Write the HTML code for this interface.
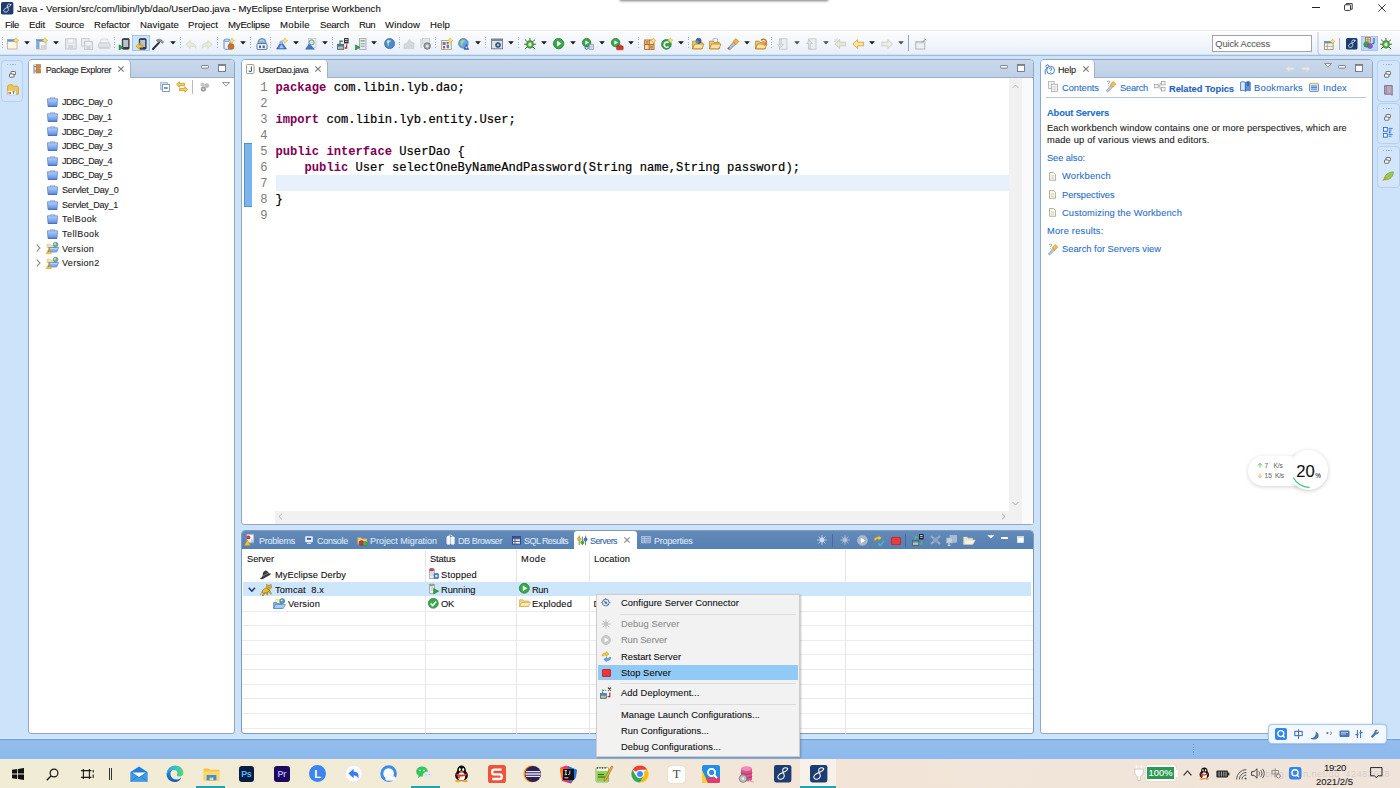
<!DOCTYPE html>
<html><head><meta charset="utf-8">
<style>
*{box-sizing:border-box;margin:0;padding:0}
html,body{width:1400px;height:788px;overflow:hidden;background:#cde3fa;font-family:"Liberation Sans",sans-serif;font-size:9.3px;color:#1a1a1a}
.a{position:absolute}
.t{position:absolute;white-space:pre;line-height:1;-webkit-text-stroke:.1px currentColor}
.m{position:absolute;white-space:pre;line-height:1;font-family:"Liberation Mono",monospace;font-size:12.15px;color:#000;-webkit-text-stroke:.2px currentColor}
.kw{color:#7f0055;font-weight:bold;-webkit-text-stroke:0}
svg{overflow:visible}
</style></head><body>
<div class="a" style="left:0px;top:0.0px;width:1400px;height:32px;background:#ffffff;"></div>
<div class="t" style="left:17.0px;top:4.4px;font-size:9.6px;letter-spacing:0.036px;color:#111;">Java - Version/src/com/libin/lyb/dao/UserDao.java - MyEclipse Enterprise Workbench</div>
<div class="t" style="left:5.0px;top:19.8px;font-size:9.6px;letter-spacing:-0.367px;color:#111;">File</div>
<div class="t" style="left:29.0px;top:19.8px;font-size:9.6px;letter-spacing:-0.136px;color:#111;">Edit</div>
<div class="t" style="left:55.0px;top:19.8px;font-size:9.6px;letter-spacing:-0.236px;color:#111;">Source</div>
<div class="t" style="left:94.0px;top:19.8px;font-size:9.6px;letter-spacing:-0.035px;color:#111;">Refactor</div>
<div class="t" style="left:140.0px;top:19.8px;font-size:9.6px;letter-spacing:0.139px;color:#111;">Navigate</div>
<div class="t" style="left:188.0px;top:19.8px;font-size:9.6px;letter-spacing:0.017px;color:#111;">Project</div>
<div class="t" style="left:228.0px;top:19.8px;font-size:9.6px;letter-spacing:-0.194px;color:#111;">MyEclipse</div>
<div class="t" style="left:280.0px;top:19.8px;font-size:9.6px;letter-spacing:0.287px;color:#111;">Mobile</div>
<div class="t" style="left:320.0px;top:19.8px;font-size:9.6px;letter-spacing:-0.236px;color:#111;">Search</div>
<div class="t" style="left:359.0px;top:19.8px;font-size:9.6px;letter-spacing:-0.537px;color:#111;">Run</div>
<div class="t" style="left:385.0px;top:19.8px;font-size:9.6px;letter-spacing:0.143px;color:#111;">Window</div>
<div class="t" style="left:430.0px;top:19.8px;font-size:9.6px;letter-spacing:0.064px;color:#111;">Help</div>
<div class="a" style="left:0px;top:30.3px;width:1400px;height:0.8px;background:#eeeeee;"></div>
<div class="a" style="left:0px;top:31.0px;width:1400px;height:22.3px;background:linear-gradient(#fdfdfe 0%,#f3f6fc 50%,#e8effa 100%);"></div>
<div class="a" style="left:0px;top:53.3px;width:1400px;height:1.2px;background:#e4f1fc;"></div>
<div class="a" style="left:0px;top:54.5px;width:1400px;height:1px;background:#a9bbce;"></div>
<div class="a" style="left:28px;top:59.0px;width:207px;height:675.4px;background:#fff;border:1px solid #93a7c2;border-radius:4px 4px 3px 3px"></div>
<div class="a" style="left:29px;top:60.0px;width:205px;height:17.5px;background:linear-gradient(#cad8eb,#bed0e6);border-radius:3px 3px 0 0;border-bottom:1px solid #9fb0c8"></div>
<div class="a" style="left:29px;top:60.0px;width:102px;height:18px;background:#fff;border-right:1px solid #a3b2c6;border-radius:3px 4px 0 0"></div>
<div class="a" style="left:241px;top:59.0px;width:793px;height:466.4px;background:#fff;border:1px solid #93a7c2;border-radius:4px 4px 3px 3px"></div>
<div class="a" style="left:242px;top:60.0px;width:791px;height:17.5px;background:linear-gradient(#cad8eb,#bed0e6);border-radius:3px 3px 0 0;border-bottom:1px solid #9fb0c8"></div>
<div class="a" style="left:242px;top:60.0px;width:85.6px;height:18px;background:#fff;border-right:1px solid #a3b2c6;border-radius:3px 4px 0 0"></div>
<div class="a" style="left:1040px;top:59.0px;width:332.5px;height:675.4px;background:#fff;border:1px solid #93a7c2;border-radius:4px 4px 3px 3px"></div>
<div class="a" style="left:1041px;top:60.0px;width:330.5px;height:17.5px;background:linear-gradient(#cad8eb,#bed0e6);border-radius:3px 3px 0 0;border-bottom:1px solid #9fb0c8"></div>
<div class="a" style="left:1041px;top:60.0px;width:54px;height:18px;background:#fff;border-right:1px solid #a3b2c6;border-radius:3px 4px 0 0"></div>
<div class="t" style="left:45.7px;top:65.5px;font-size:9.0px;letter-spacing:-0.346px;color:#222;">Package Explorer</div>
<div class="t" style="left:258.5px;top:65.5px;font-size:9.0px;letter-spacing:-0.377px;color:#222;">UserDao.java</div>
<div class="t" style="left:1058.0px;top:65.5px;font-size:9.0px;letter-spacing:-0.127px;color:#222;">Help</div>
<div class="t" style="left:62.0px;top:98.3px;font-size:9.0px;letter-spacing:-0.452px;color:#222;">JDBC_Day_0</div>
<div class="t" style="left:62.0px;top:112.9px;font-size:9.0px;letter-spacing:-0.502px;color:#222;">JDBC_Day_1</div>
<div class="t" style="left:62.0px;top:127.5px;font-size:9.0px;letter-spacing:-0.452px;color:#222;">JDBC_Day_2</div>
<div class="t" style="left:62.0px;top:142.1px;font-size:9.0px;letter-spacing:-0.452px;color:#222;">JDBC_Day_3</div>
<div class="t" style="left:62.0px;top:156.7px;font-size:9.0px;letter-spacing:-0.452px;color:#222;">JDBC_Day_4</div>
<div class="t" style="left:62.0px;top:171.4px;font-size:9.0px;letter-spacing:-0.452px;color:#222;">JDBC_Day_5</div>
<div class="t" style="left:62.0px;top:186.0px;font-size:9.0px;letter-spacing:-0.195px;color:#222;">Servlet_Day_0</div>
<div class="t" style="left:62.0px;top:200.6px;font-size:9.0px;letter-spacing:-0.233px;color:#222;">Servlet_Day_1</div>
<div class="t" style="left:62.0px;top:215.2px;font-size:9.0px;letter-spacing:0.426px;color:#222;">TelBook</div>
<div class="t" style="left:62.0px;top:229.8px;font-size:9.0px;letter-spacing:0.435px;color:#222;">TellBook</div>
<div class="t" style="left:62.0px;top:244.5px;font-size:9.0px;letter-spacing:0.283px;color:#222;">Version</div>
<div class="t" style="left:62.0px;top:259.1px;font-size:9.0px;letter-spacing:0.309px;color:#222;">Version2</div>
<div class="a" style="left:275.5px;top:175.4px;width:733px;height:15.4px;background:#e8f0fc;"></div>
<div class="a" style="left:244px;top:143.2px;width:8px;height:63.6px;background:#7db4ea;border:1px solid #4f93d6;border-right:none"></div>
<div class="m" style="left:260.3px;top:82.3px;color:#7d7d7d;-webkit-text-stroke:0">1</div>
<div class="m" style="left:275.4px;top:82.3px"><span class="kw">package</span> com.libin.lyb.dao;</div>
<div class="m" style="left:260.3px;top:98.3px;color:#7d7d7d;-webkit-text-stroke:0">2</div>
<div class="m" style="left:260.3px;top:114.3px;color:#7d7d7d;-webkit-text-stroke:0">3</div>
<div class="m" style="left:275.4px;top:114.3px"><span class="kw">import</span> com.libin.lyb.entity.User;</div>
<div class="m" style="left:260.3px;top:130.3px;color:#7d7d7d;-webkit-text-stroke:0">4</div>
<div class="m" style="left:260.3px;top:146.3px;color:#7d7d7d;-webkit-text-stroke:0">5</div>
<div class="m" style="left:275.4px;top:146.3px"><span class="kw">public</span> <span class="kw">interface</span> UserDao {</div>
<div class="m" style="left:260.3px;top:162.3px;color:#7d7d7d;-webkit-text-stroke:0">6</div>
<div class="m" style="left:275.4px;top:162.3px">    <span class="kw">public</span> User selectOneByNameAndPassword(String name,String password);</div>
<div class="m" style="left:260.3px;top:178.3px;color:#7d7d7d;-webkit-text-stroke:0">7</div>
<div class="m" style="left:260.3px;top:194.3px;color:#7d7d7d;-webkit-text-stroke:0">8</div>
<div class="m" style="left:275.4px;top:194.3px">}</div>
<div class="m" style="left:260.3px;top:210.3px;color:#7d7d7d;-webkit-text-stroke:0">9</div>
<div class="t" style="left:1062.0px;top:84.3px;font-size:9.3px;letter-spacing:-0.028px;color:#2a6fc9;">Contents</div>
<div class="t" style="left:1120.0px;top:84.3px;font-size:9.3px;letter-spacing:-0.244px;color:#2a6fc9;">Search</div>
<div class="t" style="left:1169.0px;top:84.6px;font-size:9.3px;letter-spacing:-0.033px;color:#1b62c4;font-weight:bold;">Related Topics</div>
<div class="t" style="left:1254.0px;top:84.3px;font-size:9.3px;letter-spacing:0.276px;color:#2a6fc9;">Bookmarks</div>
<div class="t" style="left:1323.0px;top:84.3px;font-size:9.3px;letter-spacing:0.250px;color:#2a6fc9;">Index</div>
<div class="a" style="left:1046px;top:97.0px;width:320px;height:1px;background:#b9c6d6;"></div>
<div class="t" style="left:1047.0px;top:109.1px;font-size:9.3px;letter-spacing:-0.121px;color:#1b6fca;font-weight:bold;">About Servers</div>
<div class="t" style="left:1047.0px;top:123.9px;font-size:9.3px;letter-spacing:0.120px;color:#222;">Each workbench window contains one or more perspectives, which are</div>
<div class="t" style="left:1047.0px;top:135.9px;font-size:9.3px;letter-spacing:0.173px;color:#222;">made up of various views and editors.</div>
<div class="t" style="left:1047.0px;top:154.3px;font-size:9.3px;letter-spacing:-0.086px;color:#2a6fc9;">See also:</div>
<div class="t" style="left:1062.0px;top:172.3px;font-size:9.3px;letter-spacing:0.237px;color:#2a6fc9;">Workbench</div>
<div class="t" style="left:1062.0px;top:190.6px;font-size:9.3px;letter-spacing:-0.062px;color:#2a6fc9;">Perspectives</div>
<div class="t" style="left:1062.0px;top:208.8px;font-size:9.3px;letter-spacing:0.155px;color:#2a6fc9;">Customizing the Workbench</div>
<div class="t" style="left:1047.0px;top:227.3px;font-size:9.3px;letter-spacing:0.212px;color:#2a6fc9;">More results:</div>
<div class="t" style="left:1062.0px;top:245.3px;font-size:9.3px;letter-spacing:0.012px;color:#2a6fc9;">Search for Servers view</div>
<div class="a" style="left:241px;top:530.0px;width:793px;height:204.4px;background:#fff;border:1px solid #8399b8;border-radius:4px 4px 3px 3px"></div>
<div class="a" style="left:242px;top:531.0px;width:791px;height:18px;background:linear-gradient(#628aba,#5680b2);border-radius:3px 3px 0 0"></div>
<div class="a" style="left:574px;top:531.0px;width:63px;height:18.5px;background:#fff;border-radius:3px 3px 0 0"></div>
<div class="t" style="left:259.0px;top:536.8px;font-size:9.0px;letter-spacing:-0.252px;color:#dde7f4;">Problems</div>
<div class="t" style="left:317.0px;top:536.8px;font-size:9.0px;letter-spacing:-0.289px;color:#dde7f4;">Console</div>
<div class="t" style="left:370.0px;top:536.8px;font-size:9.0px;letter-spacing:-0.031px;color:#dde7f4;">Project Migration</div>
<div class="t" style="left:458.0px;top:536.8px;font-size:9.0px;letter-spacing:-0.401px;color:#dde7f4;">DB Browser</div>
<div class="t" style="left:524.0px;top:536.8px;font-size:9.0px;letter-spacing:-0.562px;color:#dde7f4;">SQL Results</div>
<div class="t" style="left:590.0px;top:536.8px;font-size:9.0px;letter-spacing:-0.573px;color:#3a66a6;">Servers</div>
<div class="t" style="left:654.0px;top:536.8px;font-size:9.0px;letter-spacing:-0.252px;color:#dde7f4;">Properties</div>
<div class="a" style="left:424.6px;top:550.0px;width:1px;height:184px;background:#e6e6e6;"></div>
<div class="a" style="left:515.6px;top:550.0px;width:1px;height:184px;background:#e6e6e6;"></div>
<div class="a" style="left:588.6px;top:550.0px;width:1px;height:184px;background:#e6e6e6;"></div>
<div class="a" style="left:844.6px;top:550.0px;width:1px;height:184px;background:#e6e6e6;"></div>
<div class="a" style="left:242px;top:610.6px;width:791px;height:1px;background:#ebebeb;"></div>
<div class="a" style="left:242px;top:625.22px;width:791px;height:1px;background:#ebebeb;"></div>
<div class="a" style="left:242px;top:639.84px;width:791px;height:1px;background:#ebebeb;"></div>
<div class="a" style="left:242px;top:654.46px;width:791px;height:1px;background:#ebebeb;"></div>
<div class="a" style="left:242px;top:669.08px;width:791px;height:1px;background:#ebebeb;"></div>
<div class="a" style="left:242px;top:683.7px;width:791px;height:1px;background:#ebebeb;"></div>
<div class="a" style="left:242px;top:698.32px;width:791px;height:1px;background:#ebebeb;"></div>
<div class="a" style="left:242px;top:712.94px;width:791px;height:1px;background:#ebebeb;"></div>
<div class="a" style="left:242px;top:727.56px;width:791px;height:1px;background:#ebebeb;"></div>
<div class="a" style="left:243px;top:581.6px;width:788.4px;height:14.8px;background:#cde6fb;"></div>
<div class="t" style="left:247.0px;top:554.9px;font-size:9.3px;letter-spacing:-0.065px;color:#111;">Server</div>
<div class="t" style="left:430.0px;top:554.9px;font-size:9.3px;letter-spacing:-0.144px;color:#111;">Status</div>
<div class="t" style="left:521.0px;top:554.9px;font-size:9.3px;letter-spacing:0.434px;color:#111;">Mode</div>
<div class="t" style="left:594.0px;top:554.9px;font-size:9.3px;letter-spacing:0.105px;color:#111;">Location</div>
<div class="t" style="left:275.0px;top:570.7px;font-size:9.3px;letter-spacing:0.082px;color:#111;">MyEclipse Derby</div>
<div class="t" style="left:441.0px;top:570.7px;font-size:9.3px;letter-spacing:0.193px;color:#111;">Stopped</div>
<div class="t" style="left:275.0px;top:585.5px;font-size:9.3px;letter-spacing:0.132px;color:#111;">Tomcat  8.x</div>
<div class="t" style="left:441.0px;top:585.5px;font-size:9.3px;letter-spacing:-0.021px;color:#111;">Running</div>
<div class="t" style="left:532.0px;top:585.5px;font-size:9.3px;letter-spacing:-0.354px;color:#111;">Run</div>
<div class="t" style="left:288.0px;top:600.1px;font-size:9.3px;letter-spacing:0.140px;color:#111;">Version</div>
<div class="t" style="left:441.0px;top:600.1px;font-size:9.3px;letter-spacing:-0.218px;color:#111;">OK</div>
<div class="t" style="left:532.0px;top:600.1px;font-size:9.3px;letter-spacing:0.152px;color:#111;">Exploded</div>
<div class="a" style="left:1.5px;top:37px;width:1px;height:11px;background:repeating-linear-gradient(#a9b9cf 0 1px,transparent 1px 2.5px)"></div>
<svg class="a" style="left:6.8px;top:37.5px" width="12" height="12" viewBox="0 0 12 12"><rect x=".5" y="1.5" width="9.5" height="9.5" fill="#fdf8e4" stroke="#b8b08a" stroke-width=".8"/><rect x=".5" y="1.5" width="9.5" height="2.2" fill="#5f93da"/><polygon points="9.00,-0.34 9.90,1.60 11.84,2.50 9.90,3.40 9.00,5.34 8.10,3.40 6.16,2.50 8.10,1.60" fill="#fbe68a" stroke="#d9a622" stroke-width=".5"/></svg>
<svg class="a" style="left:23.5px;top:41.2px" width="6" height="4" viewBox="0 0 6 4"><path d="M0.2 0.3h5.6L3 3.6z" fill="#1a1a1a"/></svg>
<svg class="a" style="left:36px;top:37.5px" width="12" height="12" viewBox="0 0 12 12"><rect x=".5" y="1.5" width="9.5" height="9.5" fill="#fdf8e4" stroke="#b8b08a" stroke-width=".8"/><rect x=".5" y="1.5" width="9.5" height="2.2" fill="#5f93da"/><rect x=".5" y="3.7" width="3" height="7.3" fill="#7fa9e3"/><rect x="5" y="7" width="5" height="3" fill="#c9d7ea"/><polygon points="9.00,-0.34 9.90,1.60 11.84,2.50 9.90,3.40 9.00,5.34 8.10,3.40 6.16,2.50 8.10,1.60" fill="#fbe68a" stroke="#d9a622" stroke-width=".5"/></svg>
<svg class="a" style="left:52.7px;top:41.2px" width="6" height="4" viewBox="0 0 6 4"><path d="M0.2 0.3h5.6L3 3.6z" fill="#1a1a1a"/></svg>
<svg class="a" style="left:64.8px;top:37.5px" width="12" height="12" viewBox="0 0 12 12"><rect x=".6" y=".8" width="10.5" height="10.2" fill="#e9ebee" stroke="#c3c6ca" stroke-width="1"/><rect x="3" y="1" width="5.6" height="4" fill="#f7f8f9" stroke="#cfd2d6" stroke-width=".6"/><rect x="3.3" y="7.2" width="5" height="3.6" fill="#d2d5d9"/></svg>
<svg class="a" style="left:81px;top:37.5px" width="12" height="12" viewBox="0 0 12 12"><rect x=".6" y=".6" width="7.5" height="7.5" fill="#e9ebee" stroke="#c6c9cd" stroke-width=".9"/><rect x="3.6" y="3.6" width="8" height="8" fill="#e4e6e9" stroke="#c3c6ca" stroke-width=".9"/><rect x="5.6" y="8" width="4" height="3" fill="#d0d3d7"/><rect x="5.4" y="4" width="4.2" height="2.4" fill="#f7f8f9"/></svg>
<svg class="a" style="left:97.6px;top:37.5px" width="13" height="12" viewBox="0 0 13 12"><path d="M3 1h6.5l1 4H2z" fill="#f1f2f4" stroke="#cfd2d6" stroke-width=".7"/><rect x=".6" y="5" width="11.4" height="5.4" rx="1" fill="#e3e5e8" stroke="#c6c9cd" stroke-width=".8"/><rect x="1.5" y="8.6" width="9.6" height="1.2" fill="#cdd0d4"/></svg>
<div class="a" style="left:113.5px;top:37px;width:1px;height:11px;background:repeating-linear-gradient(#a9b9cf 0 1px,transparent 1px 2.5px)"></div>
<svg class="a" style="left:118.6px;top:37.5px" width="12" height="12" viewBox="0 0 12 12"><rect x="3.2" y=".5" width="7" height="10.8" rx="1.3" fill="#3a3f47" stroke="#22262c" stroke-width=".6"/><rect x="4.2" y="2" width="5" height="7" fill="#b9c3cf"/><path d="M0 6.8L4.6 9.4L0 12z" fill="#2fa043" stroke="#1d7a2e" stroke-width=".5"/></svg>
<div class="a" style="left:132px;top:35.0px;width:18.4px;height:15.6px;background:#cfe3f8;border:1px solid #9fc3ea"></div>
<svg class="a" style="left:136.4px;top:37.5px" width="12" height="12" viewBox="0 0 12 12"><rect x="3.2" y=".5" width="7" height="10.8" rx="1.3" fill="#3a3f47" stroke="#22262c" stroke-width=".6"/><rect x="4.2" y="2" width="5" height="7" fill="#b9c3cf"/><path d="M0 8.2L3.6 5v2h3.2v2.6H3.6v2z" fill="#f3c545" stroke="#b98a16" stroke-width=".6"/></svg>
<svg class="a" style="left:152px;top:37.5px" width="12" height="12" viewBox="0 0 12 12"><path d="M1 11L7 4.6" stroke="#2c2f33" stroke-width="2" stroke-linecap="round"/><path d="M4.2 2.2C6.5 .4 9.6 .8 11.6 4.2L10.2 5.2C9 3.6 7.6 3.4 6.4 4.4z" fill="#8c939c" stroke="#5b6068" stroke-width=".5"/></svg>
<svg class="a" style="left:169.5px;top:41.2px" width="6" height="4" viewBox="0 0 6 4"><path d="M0.2 0.3h5.6L3 3.6z" fill="#1a1a1a"/></svg>
<div class="a" style="left:179.5px;top:37px;width:1px;height:11px;background:repeating-linear-gradient(#a9b9cf 0 1px,transparent 1px 2.5px)"></div>
<svg class="a" style="left:184.6px;top:37.5px" width="12" height="12" viewBox="0 0 12 12"><path d="M.8 6.4L5.2 2.4v2.4c3.6 0 5.8 1.8 5.6 5.6C9.8 8.4 8 7.8 5.2 8v2.4z" fill="#e9edd8" stroke="#cfd5b8" stroke-width=".7"/></svg>
<svg class="a" style="left:200.6px;top:37.5px" width="12" height="12" viewBox="0 0 12 12"><g transform="translate(12,0) scale(-1,1)"><path d="M.8 6.4L5.2 2.4v2.4c3.6 0 5.8 1.8 5.6 5.6C9.8 8.4 8 7.8 5.2 8v2.4z" fill="#e9edd8" stroke="#cfd5b8" stroke-width=".7"/></g></svg>
<div class="a" style="left:216.5px;top:37px;width:1px;height:11px;background:repeating-linear-gradient(#a9b9cf 0 1px,transparent 1px 2.5px)"></div>
<svg class="a" style="left:223px;top:37.5px" width="12" height="12" viewBox="0 0 12 12"><path d="M1 2.2v8c0 1.6 6 1.6 6 0v-8z" fill="#eaf2fc" stroke="#4b86d0" stroke-width=".9"/><ellipse cx="4" cy="2.2" rx="3" ry="1.2" fill="#cfe1f7" stroke="#4b86d0" stroke-width=".8"/><circle cx="8" cy="8.6" r="3" fill="#c9702a" stroke="#8e4a16" stroke-width=".5"/><polygon points="9.00,-0.15 9.88,1.72 11.75,2.60 9.88,3.48 9.00,5.35 8.12,3.48 6.25,2.60 8.12,1.72" fill="#fbe68a" stroke="#d9a622" stroke-width=".5"/></svg>
<svg class="a" style="left:239.5px;top:41.2px" width="6" height="4" viewBox="0 0 6 4"><path d="M0.2 0.3h5.6L3 3.6z" fill="#1a1a1a"/></svg>
<div class="a" style="left:249.5px;top:37px;width:1px;height:11px;background:repeating-linear-gradient(#a9b9cf 0 1px,transparent 1px 2.5px)"></div>
<svg class="a" style="left:255.6px;top:37.5px" width="12" height="12" viewBox="0 0 12 12"><circle cx="6" cy="4.4" r="4" fill="#7fb2e8" stroke="#3f78bd" stroke-width=".7"/><path d="M3.4 3.4c1.4-1.6 3.4-1.4 4.6 0" stroke="#e9d36a" stroke-width="1.1" fill="none"/><rect x="1" y="5.6" width="10" height="5.8" rx=".8" fill="#f4f7fb" stroke="#46679a" stroke-width=".9"/><path d="M3 7.4h2v2.6H3zM6.6 7.4h2.2v2.6H6.6z" fill="#46679a"/></svg>
<div class="a" style="left:270.0px;top:37px;width:1px;height:11px;background:repeating-linear-gradient(#a9b9cf 0 1px,transparent 1px 2.5px)"></div>
<svg class="a" style="left:276px;top:37.5px" width="12" height="12" viewBox="0 0 12 12"><path d="M.6 11L5.4 3.4L10.4 11z" fill="#3d79cf" stroke="#27579e" stroke-width=".6"/><path d="M3 10.2L5.4 6.2L8 10.2z" fill="#a9caf3"/><circle cx="5.2" cy="4.4" r="1.8" fill="#8fb7e8"/><polygon points="9.00,-0.15 9.88,1.72 11.75,2.60 9.88,3.48 9.00,5.35 8.12,3.48 6.25,2.60 8.12,1.72" fill="#fbe68a" stroke="#d9a622" stroke-width=".5"/></svg>
<svg class="a" style="left:292.8px;top:41.2px" width="6" height="4" viewBox="0 0 6 4"><path d="M0.2 0.3h5.6L3 3.6z" fill="#1a1a1a"/></svg>
<svg class="a" style="left:305px;top:37.5px" width="12" height="12" viewBox="0 0 12 12"><rect x="3.6" y=".6" width="7.4" height="8.6" fill="#f1f3f6" stroke="#b9c0ca" stroke-width=".7"/><path d="M.6 11.2L4.2 5.8L9.4 11.2z" fill="#3d79cf" stroke="#27579e" stroke-width=".5"/><circle cx="6.6" cy="4.4" r="2.6" fill="#cfe6c0" stroke="#5f84b8" stroke-width=".9"/></svg>
<svg class="a" style="left:321.7px;top:41.2px" width="6" height="4" viewBox="0 0 6 4"><path d="M0.2 0.3h5.6L3 3.6z" fill="#1a1a1a"/></svg>
<div class="a" style="left:332.0px;top:37px;width:1px;height:11px;background:repeating-linear-gradient(#a9b9cf 0 1px,transparent 1px 2.5px)"></div>
<svg class="a" style="left:337.2px;top:37.5px" width="12" height="12" viewBox="0 0 12 12"><rect x="7" y="0" width="4.6" height="5.6" rx=".6" fill="#2e3238"/><rect x="8" y="1" width="2.6" height="1" fill="#c7ccd3"/><rect x="8" y="2.8" width="2.6" height="1" fill="#c7ccd3"/><path d="M3 6V3.2h3" stroke="#3c7a3a" stroke-width="1.2" fill="none"/><rect x=".4" y="6.2" width="6.4" height="5.2" fill="#3f78c7" stroke="#24508f" stroke-width=".6"/><rect x="1" y="8.6" width="5.2" height="2.2" fill="#e7c34b"/><path d="M9.6 6.6v3.4H7.6" stroke="#c52a2a" stroke-width="1.3" fill="none"/></svg>
<svg class="a" style="left:354.8px;top:37.5px" width="12" height="12" viewBox="0 0 12 12"><rect x="4.4" y=".6" width="6.6" height="10.8" fill="#e6e9ed" stroke="#9aa2ad" stroke-width=".8"/><rect x="5.6" y="2" width="4.2" height="1.6" fill="#8fb77a"/><rect x="5.6" y="5" width="4.2" height="1.4" fill="#aab2bd"/><rect x="5.6" y="7.6" width="4.2" height="1.4" fill="#aab2bd"/><path d="M.4 6.8L5 9.4L.4 12z" fill="#2fa043" stroke="#1d7a2e" stroke-width=".5"/></svg>
<svg class="a" style="left:371px;top:41.2px" width="6" height="4" viewBox="0 0 6 4"><path d="M0.2 0.3h5.6L3 3.6z" fill="#1a1a1a"/></svg>
<svg class="a" style="left:383.6px;top:37.5px" width="11" height="11" viewBox="0 0 11 11"><circle cx="5.6" cy="5.6" r="5" fill="#4a8ad6" stroke="#2b5fa6" stroke-width=".7"/><path d="M3 3.4c1.2-1.6 3-1.8 4-1c-.4 1.6-1 2-2 2.4c-.6 1.2.4 2 0 3.4c-1.4-.6-2.6-2.4-2-4.8z" fill="#9fd07a"/><circle cx="4" cy="3.6" r="1.3" fill="#d6e8fb" opacity=".8"/></svg>
<div class="a" style="left:398.5px;top:37px;width:1px;height:11px;background:repeating-linear-gradient(#a9b9cf 0 1px,transparent 1px 2.5px)"></div>
<svg class="a" style="left:403px;top:37.5px" width="12" height="12" viewBox="0 0 12 12"><path d="M1 10.6V6.4l3-1.4L6.4 1.6L8.4 4l2.6 1v5.6z" fill="#d4d7db" stroke="#c2c5c9" stroke-width=".6"/></svg>
<svg class="a" style="left:420px;top:37.5px" width="12" height="12" viewBox="0 0 12 12"><rect x="2.6" y=".6" width="7" height="5.4" fill="#e3e5e8" stroke="#c6c9cd" stroke-width=".7"/><path d="M1 1v9" stroke="#b8bbc0" stroke-width=".8"/><circle cx="7.2" cy="8" r="3.3" fill="#9a9ea5" stroke="#6f737a" stroke-width=".8"/><circle cx="7.2" cy="8" r="1.5" fill="#e8e9eb"/></svg>
<div class="a" style="left:435.0px;top:37px;width:1px;height:11px;background:repeating-linear-gradient(#a9b9cf 0 1px,transparent 1px 2.5px)"></div>
<svg class="a" style="left:440.6px;top:37.5px" width="12" height="12" viewBox="0 0 12 12"><rect x=".6" y="2.4" width="9.6" height="9" fill="#f6f1df" stroke="#9c987f" stroke-width=".8"/><rect x="1.6" y="4" width="3" height="3" fill="#4a86d3"/><rect x="5.6" y="6.6" width="2.4" height="3.6" fill="#4a86d3"/><rect x="2" y="8" width="2" height="2.4" fill="#d0453b"/><rect x="5.6" y="4" width="2" height="1.8" fill="#d0453b"/><polygon points="9.20,-0.15 10.08,1.72 11.95,2.60 10.08,3.48 9.20,5.35 8.32,3.48 6.45,2.60 8.32,1.72" fill="#fbe68a" stroke="#d9a622" stroke-width=".5"/></svg>
<svg class="a" style="left:458px;top:37.5px" width="12" height="12" viewBox="0 0 12 12"><circle cx="5.4" cy="5.4" r="4.8" fill="#6aa5e4" stroke="#3a6fb5" stroke-width=".7"/><path d="M2.4 3.6c1.4-1.8 3.6-2 4.6-1c-.6 1.4-1.4 1.8-2.4 2.2c-.4 1.2.4 2-.2 3.2c-1.4-.6-2.4-2.2-2-4.4z" fill="#a9d58a"/><path d="M6 11.4l2.2-5.2l2.6 5.2z" fill="#2e64b6" stroke="#1d4688" stroke-width=".4"/><circle cx="8.4" cy="9.4" r=".9" fill="#dbe8f8"/></svg>
<svg class="a" style="left:475px;top:41.2px" width="6" height="4" viewBox="0 0 6 4"><path d="M0.2 0.3h5.6L3 3.6z" fill="#1a1a1a"/></svg>
<div class="a" style="left:485.0px;top:37px;width:1px;height:11px;background:repeating-linear-gradient(#a9b9cf 0 1px,transparent 1px 2.5px)"></div>
<svg class="a" style="left:491px;top:37.5px" width="12" height="12" viewBox="0 0 12 12"><rect x=".6" y="1" width="10.8" height="9.8" fill="#dfe3e8" stroke="#6d7682" stroke-width=".9"/><rect x=".6" y="1" width="10.8" height="2" fill="#7c8794"/><circle cx="7" cy="7" r="2.5" fill="#3d5f8f" stroke="#26405f" stroke-width=".6"/><circle cx="7" cy="7" r="1" fill="#cfe0f5"/></svg>
<svg class="a" style="left:507.6px;top:41.2px" width="6" height="4" viewBox="0 0 6 4"><path d="M0.2 0.3h5.6L3 3.6z" fill="#1a1a1a"/></svg>
<div class="a" style="left:517.5px;top:37px;width:1px;height:11px;background:repeating-linear-gradient(#a9b9cf 0 1px,transparent 1px 2.5px)"></div>
<svg class="a" style="left:523.6px;top:37.5px" width="12" height="12" viewBox="0 0 12 12"><path d="M1 1.6l2.4 2.2M11 1.6L8.6 3.8M0 6.2h3M12 6.2H9M1 11l2.4-2.4M11 11L8.6 8.6M6 0v2.4" stroke="#3b6f2a" stroke-width="1"/><ellipse cx="6" cy="6.4" rx="3.4" ry="3.8" fill="#59b04a" stroke="#2f7a2a" stroke-width=".8"/><ellipse cx="6" cy="6.6" rx="1.6" ry="2" fill="#d6efc9"/></svg>
<svg class="a" style="left:540.5px;top:41.2px" width="6" height="4" viewBox="0 0 6 4"><path d="M0.2 0.3h5.6L3 3.6z" fill="#1a1a1a"/></svg>
<svg class="a" style="left:553px;top:37.5px" width="12" height="12" viewBox="0 0 12 12"><circle cx="5.6" cy="5.6" r="5.2" fill="#3aa84a" stroke="#1f7a2c" stroke-width=".8"/><path d="M4 2.8L8.6 5.6L4 8.4z" fill="#fff"/></svg>
<svg class="a" style="left:569.6px;top:41.2px" width="6" height="4" viewBox="0 0 6 4"><path d="M0.2 0.3h5.6L3 3.6z" fill="#1a1a1a"/></svg>
<svg class="a" style="left:582px;top:37.5px" width="12" height="12" viewBox="0 0 12 12"><circle cx="4.6" cy="4.6" r="4.2" fill="#3aa84a" stroke="#1f7a2c" stroke-width=".8"/><path d="M3.4 2.4L7 4.6L3.4 6.8z" fill="#fff"/><rect x="7.2" y="6.4" width="4.2" height="5" fill="#c9d3e2" stroke="#7f8fa8" stroke-width=".6"/><circle cx="4.6" cy="9.8" r="1.6" fill="none" stroke="#2f64b0" stroke-width=".9"/></svg>
<svg class="a" style="left:599px;top:41.2px" width="6" height="4" viewBox="0 0 6 4"><path d="M0.2 0.3h5.6L3 3.6z" fill="#1a1a1a"/></svg>
<svg class="a" style="left:611px;top:37.5px" width="12" height="12" viewBox="0 0 12 12"><circle cx="4.6" cy="4.6" r="4.2" fill="#3aa84a" stroke="#1f7a2c" stroke-width=".8"/><path d="M3.4 2.4L7 4.6L3.4 6.8z" fill="#fff"/><rect x="5.6" y="8" width="6.6" height="3.8" rx=".6" fill="#d23a2e" stroke="#962118" stroke-width=".5"/><path d="M7.6 8V7h2.6v1" stroke="#962118" stroke-width=".8" fill="none"/></svg>
<svg class="a" style="left:628px;top:41.2px" width="6" height="4" viewBox="0 0 6 4"><path d="M0.2 0.3h5.6L3 3.6z" fill="#1a1a1a"/></svg>
<div class="a" style="left:638.0px;top:37px;width:1px;height:11px;background:repeating-linear-gradient(#a9b9cf 0 1px,transparent 1px 2.5px)"></div>
<svg class="a" style="left:644px;top:37.5px" width="12" height="12" viewBox="0 0 12 12"><rect x=".6" y="2" width="9.4" height="9.4" fill="#f3dcb4" stroke="#a7672a" stroke-width=".9"/><path d="M.6 6.6h9.4M5.2 2v9.4" stroke="#a7672a" stroke-width="1"/><rect x="1.4" y="2.8" width="3" height="3" fill="#d98c3a"/><rect x="6" y="7.4" width="3.2" height="3.2" fill="#d98c3a"/><polygon points="9.40,-0.15 10.28,1.72 12.15,2.60 10.28,3.48 9.40,5.35 8.52,3.48 6.65,2.60 8.52,1.72" fill="#fbe68a" stroke="#d9a622" stroke-width=".5"/></svg>
<svg class="a" style="left:661px;top:37.5px" width="12" height="12" viewBox="0 0 12 12"><circle cx="5.4" cy="6.4" r="4.8" fill="#38a14a" stroke="#1f7a2c" stroke-width=".8"/><path d="M7.6 4.8C6.8 3.8 5 3.6 4 4.8c-1 1.2-1 2.8 0 3.8c1 1 2.8 1 3.6 0" stroke="#fff" stroke-width="1.4" fill="none"/><polygon points="9.40,-0.18 10.22,1.58 11.98,2.40 10.22,3.22 9.40,4.98 8.58,3.22 6.82,2.40 8.58,1.58" fill="#fbe68a" stroke="#d9a622" stroke-width=".5"/></svg>
<svg class="a" style="left:677.6px;top:41.2px" width="6" height="4" viewBox="0 0 6 4"><path d="M0.2 0.3h5.6L3 3.6z" fill="#1a1a1a"/></svg>
<div class="a" style="left:687.5px;top:37px;width:1px;height:11px;background:repeating-linear-gradient(#a9b9cf 0 1px,transparent 1px 2.5px)"></div>
<svg class="a" style="left:692px;top:37.5px" width="12" height="12" viewBox="0 0 12 12"><path d="M.6 3.2h3.6l1 1.2h5v6.4H.6z" fill="#f5c96b" stroke="#b98222" stroke-width=".8"/><path d="M.6 10.8L2.6 6h9.4l-2 4.8z" fill="#fbe2a0" stroke="#b98222" stroke-width=".8"/><circle cx="6.6" cy="2.8" r="2.6" fill="#4c58b8" stroke="#2d357a" stroke-width=".5"/><circle cx="5.2" cy="3.8" r="1.6" fill="#4fae55"/></svg>
<svg class="a" style="left:709px;top:37.5px" width="12" height="12" viewBox="0 0 12 12"><rect x="4" y=".8" width="4.6" height="3.8" fill="#f2f4f7" stroke="#8d96a3" stroke-width=".6"/><path d="M.6 3.2h3.6l1 1.2h5v6.4H.6z" fill="#f5c96b" stroke="#b98222" stroke-width=".8"/><path d="M.6 10.8L2.6 6h9.4l-2 4.8z" fill="#fbe2a0" stroke="#b98222" stroke-width=".8"/></svg>
<svg class="a" style="left:727px;top:37.5px" width="12" height="12" viewBox="0 0 12 12"><path d="M.8 10.6L6.4 4l2.4 2.2L2.8 11.8z" fill="#b7bec8" stroke="#6f7885" stroke-width=".6"/><path d="M6 3.4L9 .6l2.8 2.8L9 6.6z" fill="#f2b53a" stroke="#b67a14" stroke-width=".6"/><path d="M1 11l1.4-1.4" stroke="#c94a2a" stroke-width="1.4"/></svg>
<svg class="a" style="left:743.8px;top:41.2px" width="6" height="4" viewBox="0 0 6 4"><path d="M0.2 0.3h5.6L3 3.6z" fill="#1a1a1a"/></svg>
<svg class="a" style="left:755px;top:37.5px" width="12" height="12" viewBox="0 0 12 12"><path d="M.6 3.2h3.6l1 1.2h5v6.4H.6z" fill="#f5c96b" stroke="#b98222" stroke-width=".8"/><path d="M.6 10.8L2.6 6h9.4l-2 4.8z" fill="#fbe2a0" stroke="#b98222" stroke-width=".8"/><path d="M6 2.4c2-2 5-1 5.4 1.4c.2 1.8-1 3-2.4 3.4" stroke="#c9702a" stroke-width="1.4" fill="none"/><circle cx="8.6" cy="5" r="2" fill="#e09a4a"/></svg>
<div class="a" style="left:770.5px;top:37px;width:1px;height:11px;background:repeating-linear-gradient(#a9b9cf 0 1px,transparent 1px 2.5px)"></div>
<svg class="a" style="left:776px;top:37.5px" width="12" height="12" viewBox="0 0 12 12"><rect x="3.6" y=".8" width="7.4" height="10.4" fill="#eceef1" stroke="#bfc3c9" stroke-width=".8"/><path d="M3.4 1v5.4H1.4L4.4 10l3-3.6h-2V1z" fill="#dfe2e6" stroke="#b9bdc3" stroke-width=".6"/></svg>
<svg class="a" style="left:793.6px;top:41.2px" width="6" height="4" viewBox="0 0 6 4"><path d="M0.2 0.3h5.6L3 3.6z" fill="#4a4a4a"/></svg>
<svg class="a" style="left:805px;top:37.5px" width="12" height="12" viewBox="0 0 12 12"><rect x="3.6" y=".8" width="7.4" height="10.4" fill="#eceef1" stroke="#bfc3c9" stroke-width=".8"/><path d="M3.4 11V5.6H1.4L4.4 2l3 3.6h-2V11z" fill="#dfe2e6" stroke="#b9bdc3" stroke-width=".6"/></svg>
<svg class="a" style="left:822.5px;top:41.2px" width="6" height="4" viewBox="0 0 6 4"><path d="M0.2 0.3h5.6L3 3.6z" fill="#4a4a4a"/></svg>
<svg class="a" style="left:834px;top:37.5px" width="13" height="12" viewBox="0 0 13 12"><path d="M.8 6L5.6 1.6v2.6h6v3.6h-6v2.6z" fill="#e6e8d6" stroke="#c3c7b0" stroke-width=".8"/><path d="M1 1.2l1 1.6M3 .6v1.8M0 3.2h1.8" stroke="#b8bcc2" stroke-width=".7"/></svg>
<svg class="a" style="left:852px;top:37.5px" width="13" height="12" viewBox="0 0 13 12"><path d="M.8 6L5.6 1.6v2.6h6v3.6h-6v2.6z" fill="#fbe7a0" stroke="#d69e1e" stroke-width=".8"/></svg>
<svg class="a" style="left:868.5px;top:41.2px" width="6" height="4" viewBox="0 0 6 4"><path d="M0.2 0.3h5.6L3 3.6z" fill="#1a1a1a"/></svg>
<svg class="a" style="left:880.6px;top:37.5px" width="13" height="12" viewBox="0 0 13 12"><g transform="translate(12.4,0) scale(-1,1)"><path d="M.8 6L5.6 1.6v2.6h6v3.6h-6v2.6z" fill="#eceee2" stroke="#c6c9b8" stroke-width=".8"/></g></svg>
<svg class="a" style="left:897.5px;top:41.2px" width="6" height="4" viewBox="0 0 6 4"><path d="M0.2 0.3h5.6L3 3.6z" fill="#4a4a4a"/></svg>
<div class="a" style="left:908px;top:35.0px;width:1px;height:16px;background:#9aa7b8;"></div>
<svg class="a" style="left:915px;top:37.5px" width="12" height="12" viewBox="0 0 12 12"><rect x=".8" y="3.4" width="9" height="7.6" fill="#eef0f3" stroke="#a9aeb6" stroke-width=".9"/><rect x=".8" y="3.4" width="9" height="1.8" fill="#c8ccd2"/><path d="M7 4.6L10.6 1M9.4 .6l1.8 1.8" stroke="#8d929a" stroke-width="1"/></svg>
<svg class="a" style="left:33.2px;top:64.2px" width="9" height="10" viewBox="0 0 9 10"><path d="M1 .5v9.2" stroke="#7a7a7a" stroke-width="1"/><path d="M1 2.6h2M1 7h2" stroke="#7a7a7a" stroke-width=".8"/><rect x="3" y=".6" width="4.6" height="3.8" fill="#c98b4a" stroke="#9a6128" stroke-width=".5"/><rect x="3" y="5.2" width="4.6" height="3.8" fill="#c98b4a" stroke="#9a6128" stroke-width=".5"/></svg>
<svg class="a" style="left:117px;top:65.2px" width="8" height="8" viewBox="0 0 8 8"><path d="M1.2999999999999998 1.2999999999999998L6.7 6.7M6.7 1.2999999999999998L1.2999999999999998 6.7" stroke="#7a7a7a" stroke-width="1.15"/></svg>
<svg class="a" style="left:201px;top:64.6px" width="8" height="4" viewBox="0 0 8 4"><rect x=".5" y=".5" width="7" height="2.6" rx=".8" fill="#fff" stroke="#66788f" stroke-width=".9"/></svg>
<svg class="a" style="left:218px;top:64.4px" width="8" height="8" viewBox="0 0 8 8"><rect x=".5" y=".5" width="7" height="7" fill="#fff" stroke="#66788f" stroke-width=".9"/><rect x=".5" y=".3" width="7" height="1.6" fill="#7d7f88"/></svg>
<svg class="a" style="left:160px;top:82.0px" width="10" height="10" viewBox="0 0 10 10"><rect x=".5" y=".5" width="7" height="7" fill="#cfe0ee" stroke="#9db9d2" stroke-width=".8"/><rect x="2.4" y="2.4" width="7" height="7" fill="#fff" stroke="#6e8fb4" stroke-width=".9"/><path d="M4 6h3.8" stroke="#3a5f8f" stroke-width="1.3"/></svg>
<svg class="a" style="left:175.6px;top:81.0px" width="12" height="12" viewBox="0 0 12 12"><path d="M.6 3.4L3.4 .8v1.6h5.2v2.2H3.4v1.6z" fill="#f8d25a" stroke="#c8951f" stroke-width=".8"/><path d="M11.6 8.6L8.8 11.2V9.6H3.6V7.4h5.2V5.8z" fill="#f8d25a" stroke="#c8951f" stroke-width=".8"/></svg>
<div class="a" style="left:191.6px;top:80.0px;width:1px;height:13.5px;background:#b9b9b9;"></div>
<svg class="a" style="left:200px;top:82.0px" width="10" height="10" viewBox="0 0 10 10"><circle cx="2.6" cy="2.6" r="2.2" fill="#c9c9c9"/><circle cx="6.8" cy="3.6" r="2.4" fill="#bdbdbd"/><circle cx="3.4" cy="7" r="2.6" fill="#9c9c9c"/><circle cx="3.4" cy="7" r="1" fill="#d8d8d8"/></svg>
<svg class="a" style="left:221.6px;top:81.8px" width="8" height="5" viewBox="0 0 8 5"><path d="M.5 .5h7L4 4.2z" fill="#fff" stroke="#7a7a7a" stroke-width=".8"/></svg>
<svg class="a" style="left:47.2px;top:97.2px" width="11" height="10" viewBox="0 0 11 10"><defs><linearGradient id="pg" x1="0" y1="0" x2="0" y2="1"><stop offset="0" stop-color="#b4d2f7"/><stop offset="1" stop-color="#5d8de0"/></linearGradient></defs><path d="M3.400 2V.4h4.200V2" fill="#eef2f8" stroke="#9dabc6" stroke-width=".7"/><path d="M.4 1.8h10.2L10 9.4H1z" fill="url(#pg)" stroke="#5a7fd0" stroke-width=".7"/><path d="M1 9.4h9" stroke="#4664b8" stroke-width=".9"/></svg>
<svg class="a" style="left:47.2px;top:111.82px" width="11" height="10" viewBox="0 0 11 10"><defs><linearGradient id="pg" x1="0" y1="0" x2="0" y2="1"><stop offset="0" stop-color="#b4d2f7"/><stop offset="1" stop-color="#5d8de0"/></linearGradient></defs><path d="M3.400 2V.4h4.200V2" fill="#eef2f8" stroke="#9dabc6" stroke-width=".7"/><path d="M.4 1.8h10.2L10 9.4H1z" fill="url(#pg)" stroke="#5a7fd0" stroke-width=".7"/><path d="M1 9.4h9" stroke="#4664b8" stroke-width=".9"/></svg>
<svg class="a" style="left:47.2px;top:126.44px" width="11" height="10" viewBox="0 0 11 10"><defs><linearGradient id="pg" x1="0" y1="0" x2="0" y2="1"><stop offset="0" stop-color="#b4d2f7"/><stop offset="1" stop-color="#5d8de0"/></linearGradient></defs><path d="M3.400 2V.4h4.200V2" fill="#eef2f8" stroke="#9dabc6" stroke-width=".7"/><path d="M.4 1.8h10.2L10 9.4H1z" fill="url(#pg)" stroke="#5a7fd0" stroke-width=".7"/><path d="M1 9.4h9" stroke="#4664b8" stroke-width=".9"/></svg>
<svg class="a" style="left:47.2px;top:141.06px" width="11" height="10" viewBox="0 0 11 10"><defs><linearGradient id="pg" x1="0" y1="0" x2="0" y2="1"><stop offset="0" stop-color="#b4d2f7"/><stop offset="1" stop-color="#5d8de0"/></linearGradient></defs><path d="M3.400 2V.4h4.200V2" fill="#eef2f8" stroke="#9dabc6" stroke-width=".7"/><path d="M.4 1.8h10.2L10 9.4H1z" fill="url(#pg)" stroke="#5a7fd0" stroke-width=".7"/><path d="M1 9.4h9" stroke="#4664b8" stroke-width=".9"/></svg>
<svg class="a" style="left:47.2px;top:155.68px" width="11" height="10" viewBox="0 0 11 10"><defs><linearGradient id="pg" x1="0" y1="0" x2="0" y2="1"><stop offset="0" stop-color="#b4d2f7"/><stop offset="1" stop-color="#5d8de0"/></linearGradient></defs><path d="M3.400 2V.4h4.200V2" fill="#eef2f8" stroke="#9dabc6" stroke-width=".7"/><path d="M.4 1.8h10.2L10 9.4H1z" fill="url(#pg)" stroke="#5a7fd0" stroke-width=".7"/><path d="M1 9.4h9" stroke="#4664b8" stroke-width=".9"/></svg>
<svg class="a" style="left:47.2px;top:170.3px" width="11" height="10" viewBox="0 0 11 10"><defs><linearGradient id="pg" x1="0" y1="0" x2="0" y2="1"><stop offset="0" stop-color="#b4d2f7"/><stop offset="1" stop-color="#5d8de0"/></linearGradient></defs><path d="M3.400 2V.4h4.200V2" fill="#eef2f8" stroke="#9dabc6" stroke-width=".7"/><path d="M.4 1.8h10.2L10 9.4H1z" fill="url(#pg)" stroke="#5a7fd0" stroke-width=".7"/><path d="M1 9.4h9" stroke="#4664b8" stroke-width=".9"/></svg>
<svg class="a" style="left:47.2px;top:184.92px" width="11" height="10" viewBox="0 0 11 10"><defs><linearGradient id="pg" x1="0" y1="0" x2="0" y2="1"><stop offset="0" stop-color="#b4d2f7"/><stop offset="1" stop-color="#5d8de0"/></linearGradient></defs><path d="M3.400 2V.4h4.200V2" fill="#eef2f8" stroke="#9dabc6" stroke-width=".7"/><path d="M.4 1.8h10.2L10 9.4H1z" fill="url(#pg)" stroke="#5a7fd0" stroke-width=".7"/><path d="M1 9.4h9" stroke="#4664b8" stroke-width=".9"/></svg>
<svg class="a" style="left:47.2px;top:199.54px" width="11" height="10" viewBox="0 0 11 10"><defs><linearGradient id="pg" x1="0" y1="0" x2="0" y2="1"><stop offset="0" stop-color="#b4d2f7"/><stop offset="1" stop-color="#5d8de0"/></linearGradient></defs><path d="M3.400 2V.4h4.200V2" fill="#eef2f8" stroke="#9dabc6" stroke-width=".7"/><path d="M.4 1.8h10.2L10 9.4H1z" fill="url(#pg)" stroke="#5a7fd0" stroke-width=".7"/><path d="M1 9.4h9" stroke="#4664b8" stroke-width=".9"/></svg>
<svg class="a" style="left:47.2px;top:214.16px" width="11" height="10" viewBox="0 0 11 10"><defs><linearGradient id="pg" x1="0" y1="0" x2="0" y2="1"><stop offset="0" stop-color="#b4d2f7"/><stop offset="1" stop-color="#5d8de0"/></linearGradient></defs><path d="M3.400 2V.4h4.200V2" fill="#eef2f8" stroke="#9dabc6" stroke-width=".7"/><path d="M.4 1.8h10.2L10 9.4H1z" fill="url(#pg)" stroke="#5a7fd0" stroke-width=".7"/><path d="M1 9.4h9" stroke="#4664b8" stroke-width=".9"/></svg>
<svg class="a" style="left:47.2px;top:228.78px" width="11" height="10" viewBox="0 0 11 10"><defs><linearGradient id="pg" x1="0" y1="0" x2="0" y2="1"><stop offset="0" stop-color="#b4d2f7"/><stop offset="1" stop-color="#5d8de0"/></linearGradient></defs><path d="M3.400 2V.4h4.200V2" fill="#eef2f8" stroke="#9dabc6" stroke-width=".7"/><path d="M.4 1.8h10.2L10 9.4H1z" fill="url(#pg)" stroke="#5a7fd0" stroke-width=".7"/><path d="M1 9.4h9" stroke="#4664b8" stroke-width=".9"/></svg>
<svg class="a" style="left:46px;top:242.0px" width="13" height="12" viewBox="0 0 13 12"><path d="M1 2.2h3.4l1 1.4H9v2H1z" fill="#f6e3a6" stroke="#d6b65a" stroke-width=".5"/><circle cx="9.6" cy="2.6" r="2.4" fill="#74ad8c" stroke="#4a7f8a" stroke-width=".6"/><circle cx="9" cy="2" r=".9" fill="#d4ecd0"/><path d="M2.6 5.6h10L10.6 10H4.6z" fill="#86b1ec" stroke="#4a7cc8" stroke-width=".7"/><path d="M4 6.6h7.6" stroke="#d4e4fa" stroke-width=".8"/><path d="M.2 11.6L2.8 6.8L5.4 11.6z" fill="#f7c53a" stroke="#c48e14" stroke-width=".5"/><path d="M2.8 8.4v1.6" stroke="#5a3c00" stroke-width=".7"/></svg>
<svg class="a" style="left:46px;top:256.6px" width="13" height="12" viewBox="0 0 13 12"><path d="M1 2.2h3.4l1 1.4H9v2H1z" fill="#f6e3a6" stroke="#d6b65a" stroke-width=".5"/><circle cx="9.6" cy="2.6" r="2.4" fill="#74ad8c" stroke="#4a7f8a" stroke-width=".6"/><circle cx="9" cy="2" r=".9" fill="#d4ecd0"/><path d="M2.6 5.6h10L10.6 10H4.6z" fill="#86b1ec" stroke="#4a7cc8" stroke-width=".7"/><path d="M4 6.6h7.6" stroke="#d4e4fa" stroke-width=".8"/><path d="M.2 11.6L2.8 6.8L5.4 11.6z" fill="#f7c53a" stroke="#c48e14" stroke-width=".5"/><path d="M2.8 8.4v1.6" stroke="#5a3c00" stroke-width=".7"/></svg>
<svg class="a" style="left:36.2px;top:244.4px" width="5" height="8" viewBox="0 0 5 8"><path d="M.8 .6L4 4L.8 7.4" fill="none" stroke="#8c8c8c" stroke-width="1.1"/></svg>
<svg class="a" style="left:36.2px;top:259.0px" width="5" height="8" viewBox="0 0 5 8"><path d="M.8 .6L4 4L.8 7.4" fill="none" stroke="#8c8c8c" stroke-width="1.1"/></svg>
<svg class="a" style="left:246px;top:64.0px" width="9" height="10" viewBox="0 0 9 10"><rect x=".5" y=".5" width="7.6" height="9" rx="1" fill="#fffdf2" stroke="#8e8a72" stroke-width=".8"/><path d="M5.4 2.4v4c0 1.4-2.2 1.4-2.4 .2" stroke="#2d5fa8" stroke-width="1.1" fill="none"/></svg>
<svg class="a" style="left:313.9px;top:65.2px" width="8" height="8" viewBox="0 0 8 8"><path d="M1.2999999999999998 1.2999999999999998L6.7 6.7M6.7 1.2999999999999998L1.2999999999999998 6.7" stroke="#7a7a7a" stroke-width="1.15"/></svg>
<svg class="a" style="left:1000px;top:64.6px" width="8" height="4" viewBox="0 0 8 4"><rect x=".5" y=".5" width="7" height="2.6" rx=".8" fill="#fff" stroke="#66788f" stroke-width=".9"/></svg>
<svg class="a" style="left:1017px;top:64.4px" width="8" height="8" viewBox="0 0 8 8"><rect x=".5" y=".5" width="7" height="7" fill="#fff" stroke="#66788f" stroke-width=".9"/><rect x=".5" y=".3" width="7" height="1.6" fill="#7d7f88"/></svg>
<div class="a" style="left:1009px;top:78.0px;width:13px;height:433px;background:#f1f1f1;"></div>
<div class="a" style="left:1022px;top:78.0px;width:11px;height:446px;background:#fafafa;"></div>
<svg class="a" style="left:1012px;top:84.0px" width="7" height="5" viewBox="0 0 7 5"><path d="M.6 4L3.5 1L6.4 4" fill="none" stroke="#b5b5b5" stroke-width="1"/></svg>
<svg class="a" style="left:1012px;top:501.2px" width="7" height="5" viewBox="0 0 7 5"><path d="M.6 1L3.5 4L6.4 1" fill="none" stroke="#a8a8a8" stroke-width="1"/></svg>
<div class="a" style="left:275px;top:510.6px;width:734px;height:13.6px;background:#f1f1f1;"></div>
<svg class="a" style="left:277.5px;top:513.0px" width="5" height="7" viewBox="0 0 5 7"><path d="M4 .6L1 3.5L4 6.4" fill="none" stroke="#b5b5b5" stroke-width="1"/></svg>
<div class="a" style="left:1009px;top:510.6px;width:13px;height:13.6px;background:#f1f1f1;"></div>
<svg class="a" style="left:1000.5px;top:512.6px" width="5" height="7" viewBox="0 0 5 7"><path d="M1 .6L4 3.500L1 6.400" fill="none" stroke="#a8a8a8" stroke-width="1"/></svg>
<svg class="a" style="left:1044px;top:63.6px" width="11" height="11" viewBox="0 0 11 11"><path d="M2.4 2.4c.2-1.6 2-1.6 2.2 0M1.2 10.4V6.4c0-1.4 1.4-2 2.4-2" stroke="#2f6fc0" stroke-width=".9" fill="none"/><circle cx="3.4" cy="2.4" r="1.5" fill="#fff" stroke="#2f6fc0" stroke-width=".8"/><circle cx="6.6" cy="6.2" r="3.9" fill="#fff" stroke="#2f6fc0" stroke-width=".9"/><path d="M5.4 5c.2-1.4 2.4-1.4 2.4 0c0 1-1.2 1-1.2 2M6.6 8.2v.6" stroke="#2f6fc0" stroke-width=".9" fill="none"/></svg>
<svg class="a" style="left:1081.6px;top:65.2px" width="8" height="8" viewBox="0 0 8 8"><path d="M1.2999999999999998 1.2999999999999998L6.7 6.7M6.7 1.2999999999999998L1.2999999999999998 6.7" stroke="#7a7a7a" stroke-width="1.15"/></svg>
<svg class="a" style="left:1285.4px;top:65.2px" width="10" height="8" viewBox="0 0 10 8"><path d="M.6 3.800L4.200 .6v2h5v2.400h-5v2z" fill="#e4e7e6" stroke="#d3d8dc" stroke-width=".6"/></svg>
<svg class="a" style="left:1301.4px;top:65.2px" width="10" height="8" viewBox="0 0 10 8"><path d="M9.400 3.800L5.800 .6v2h-5v2.400h5v2z" fill="#e4e7e6" stroke="#d3d8dc" stroke-width=".6"/></svg>
<svg class="a" style="left:1323.8px;top:63.3px" width="8" height="5" viewBox="0 0 8 5"><path d="M.5 .5h7L4 4.2z" fill="#fff" stroke="#7a7a7a" stroke-width=".8"/></svg>
<svg class="a" style="left:1338.4px;top:64.6px" width="8" height="4" viewBox="0 0 8 4"><rect x=".5" y=".5" width="7" height="2.6" rx=".8" fill="#fff" stroke="#66788f" stroke-width=".9"/></svg>
<svg class="a" style="left:1355.2px;top:64.4px" width="8" height="8" viewBox="0 0 8 8"><rect x=".5" y=".5" width="7" height="7" fill="#fff" stroke="#66788f" stroke-width=".9"/><rect x=".5" y=".3" width="7" height="1.6" fill="#7d7f88"/></svg>
<svg class="a" style="left:1048px;top:80.8px" width="11" height="11" viewBox="0 0 11 11"><rect x=".5" y=".5" width="5.6" height="7" fill="#f4f4f4" stroke="#a6a6a6" stroke-width=".7"/><rect x="3.6" y="3.2" width="6" height="7.4" fill="#fafafa" stroke="#9a9a9a" stroke-width=".7"/><path d="M4.8 5.4h3.6M4.8 7h3.6M4.8 8.6h3.6" stroke="#b9b9b9" stroke-width=".6"/></svg>
<svg class="a" style="left:1104.6px;top:80.4px" width="12" height="12" viewBox="0 0 12 12"><path d="M1.2 11L5.6 5.4l2 1.8L2.8 12z" fill="#bfc5ce" stroke="#7f8792" stroke-width=".5"/><path d="M5.2 4.6L8.2 1.4l2.6 2.6L8 7z" fill="#f0c04a" stroke="#b98a1c" stroke-width=".6"/><path d="M2.2 2c.2-1.4 2.4-1.4 2.4 0c0 1-1.2 1-1.2 2M3.4 5v.6" stroke="#7f8792" stroke-width=".8" fill="none"/></svg>
<svg class="a" style="left:1154px;top:81.0px" width="12" height="11" viewBox="0 0 12 11"><rect x=".5" y="3.4" width="3.6" height="3.4" fill="#f6f6f6" stroke="#9a9a9a" stroke-width=".7"/><rect x="7.4" y=".5" width="3.6" height="3.4" fill="#f6f6f6" stroke="#9a9a9a" stroke-width=".7"/><rect x="7.4" y="6.6" width="3.6" height="3.4" fill="#f6f6f6" stroke="#9a9a9a" stroke-width=".7"/><path d="M4.2 5h1.8V2.2h1.4M6 5v3.2h1.4" stroke="#9a9a9a" stroke-width=".7" fill="none"/></svg>
<svg class="a" style="left:1240px;top:80.6px" width="11" height="11" viewBox="0 0 11 11"><path d="M.6 1.2c1.6-.8 3.4-.6 4.8 .4v8.6C4 9.2 2.2 9 .6 9.8z" fill="#dbe9fb" stroke="#2f66b8" stroke-width=".8"/><path d="M10.2 1.2c-1.6-.8-3.4-.6-4.8 .4v8.6c1.4-1 3.200-1.200 4.8-.4z" fill="#5d95de" stroke="#2f66b8" stroke-width=".8"/><path d="M7 .6v5l1-.8l1 .8V.8" fill="#2f66b8"/></svg>
<svg class="a" style="left:1309px;top:81.6px" width="10" height="10" viewBox="0 0 10 10"><rect x=".5" y="1.6" width="9" height="7.8" rx=".8" fill="#dde9f8" stroke="#3c72c0" stroke-width=".8"/><path d="M1 1.400h8" stroke="#d9c24a" stroke-width="1.2"/><path d="M2 4h6M2 5.600h6M2 7.200h6" stroke="#3c72c0" stroke-width=".9"/></svg>
<svg class="a" style="left:1049px;top:171.8px" width="7" height="9" viewBox="0 0 7 9"><path d="M.5 .5h4l2 2v5.800H.5z" fill="#fbf8ec" stroke="#9a9480" stroke-width=".7"/><path d="M1.800 3.600h3.200M1.800 5h3.200M1.800 6.400h3.200" stroke="#c9c4b0" stroke-width=".6"/></svg>
<svg class="a" style="left:1049px;top:190.1px" width="7" height="9" viewBox="0 0 7 9"><path d="M.5 .5h4l2 2v5.800H.5z" fill="#fbf8ec" stroke="#9a9480" stroke-width=".7"/><path d="M1.800 3.600h3.200M1.800 5h3.200M1.800 6.400h3.200" stroke="#c9c4b0" stroke-width=".6"/></svg>
<svg class="a" style="left:1049px;top:208.3px" width="7" height="9" viewBox="0 0 7 9"><path d="M.5 .5h4l2 2v5.800H.5z" fill="#fbf8ec" stroke="#9a9480" stroke-width=".7"/><path d="M1.800 3.600h3.200M1.800 5h3.200M1.800 6.400h3.200" stroke="#c9c4b0" stroke-width=".6"/></svg>
<svg class="a" style="left:1047px;top:243.0px" width="12" height="12" viewBox="0 0 12 12"><path d="M1.2 11L5.6 5.4l2 1.8L2.8 12z" fill="#bfc5ce" stroke="#7f8792" stroke-width=".5"/><path d="M5.2 4.6L8.2 1.4l2.6 2.6L8 7z" fill="#f0c04a" stroke="#b98a1c" stroke-width=".6"/><path d="M2.2 2c.2-1.4 2.4-1.4 2.4 0c0 1-1.2 1-1.2 2M3.4 5v.6" stroke="#7f8792" stroke-width=".8" fill="none"/></svg>
<div class="a" style="left:1px;top:59.5px;width:22px;height:42px;background:#d2e5fa;border:1px solid #b9d0ec;border-radius:4px"></div>
<div class="a" style="left:7px;top:64px;width:10px;height:1px;background:repeating-linear-gradient(90deg,#9fb2cc 0 1.4px,transparent 1.4px 2.6px)"></div>
<svg class="a" style="left:8.5px;top:71.1px" width="7" height="7" viewBox="0 0 7 7"><rect x="2" y=".5" width="4.400" height="3.200" rx=".6" fill="#fff" stroke="#4a4a4a" stroke-width=".8"/><rect x=".5" y="3" width="4.400" height="3.200" rx=".6" fill="#fff" stroke="#4a4a4a" stroke-width=".8"/></svg>
<svg class="a" style="left:6.5px;top:84.0px" width="12" height="12" viewBox="0 0 12 12"><path d="M.6 2.600c0-1 1-1.800 2-1.800h2.600l1 1.400h3.600c1 0 1.600.6 1.600 1.600v6.400H.6z" fill="#f3c64e" stroke="#c8961e" stroke-width=".7"/><rect x=".6" y="6.600" width="8.400" height="4.400" fill="#fff" stroke="#b0b0b0" stroke-width=".4"/><path d="M2 7.800v2.400M3.400 7.800v2.400" stroke="#c03a2a" stroke-width=".9"/><path d="M5.400 7.800h2.400M6.600 7.800v2.400" stroke="#2e9a3e" stroke-width=".9"/></svg>
<div class="a" style="left:1376.5px;top:59.5px;width:23px;height:42px;background:#d2e5fa;border:1px solid #b9d0ec;border-radius:4px"></div>
<div class="a" style="left:1376.5px;top:103.0px;width:23px;height:41px;background:#d2e5fa;border:1px solid #b9d0ec;border-radius:4px"></div>
<div class="a" style="left:1376.5px;top:145.6px;width:23px;height:42px;background:#d2e5fa;border:1px solid #b9d0ec;border-radius:4px"></div>
<div class="a" style="left:1383px;top:64px;width:10px;height:1px;background:repeating-linear-gradient(90deg,#9fb2cc 0 1.4px,transparent 1.4px 2.6px)"></div>
<div class="a" style="left:1383px;top:107.5px;width:10px;height:1px;background:repeating-linear-gradient(90deg,#9fb2cc 0 1.4px,transparent 1.4px 2.6px)"></div>
<div class="a" style="left:1383px;top:150.3px;width:10px;height:1px;background:repeating-linear-gradient(90deg,#9fb2cc 0 1.4px,transparent 1.4px 2.6px)"></div>
<svg class="a" style="left:1384.1px;top:70.8px" width="7" height="7" viewBox="0 0 7 7"><rect x="2" y=".5" width="4.400" height="3.200" rx=".6" fill="#fff" stroke="#4a4a4a" stroke-width=".8"/><rect x=".5" y="3" width="4.400" height="3.200" rx=".6" fill="#fff" stroke="#4a4a4a" stroke-width=".8"/></svg>
<svg class="a" style="left:1384.1px;top:113.8px" width="7" height="7" viewBox="0 0 7 7"><rect x="2" y=".5" width="4.400" height="3.200" rx=".6" fill="#fff" stroke="#4a4a4a" stroke-width=".8"/><rect x=".5" y="3" width="4.400" height="3.200" rx=".6" fill="#fff" stroke="#4a4a4a" stroke-width=".8"/></svg>
<svg class="a" style="left:1384.1px;top:156.7px" width="7" height="7" viewBox="0 0 7 7"><rect x="2" y=".5" width="4.400" height="3.200" rx=".6" fill="#fff" stroke="#4a4a4a" stroke-width=".8"/><rect x=".5" y="3" width="4.400" height="3.200" rx=".6" fill="#fff" stroke="#4a4a4a" stroke-width=".8"/></svg>
<svg class="a" style="left:1383.6px;top:85.0px" width="9" height="11" viewBox="0 0 9 11"><path d="M.6 .6h7.600v9.800l-1.400-1.200H.6z" fill="#b9a9c0" stroke="#6f5f7a" stroke-width=".8"/><path d="M2.200 1v8" stroke="#8d7d98" stroke-width=".8"/></svg>
<svg class="a" style="left:1383.2px;top:127.4px" width="10" height="11" viewBox="0 0 10 11"><rect x=".5" y=".5" width="3.800" height="3.800" fill="#eaf2fc" stroke="#2f6fd0" stroke-width=".9"/><rect x=".5" y="6.400" width="3.800" height="3.800" fill="#eaf2fc" stroke="#2f6fd0" stroke-width=".9"/><path d="M5.600 1.400h4M5.600 3.200h3M5.600 7.400h4M5.600 9.200h3" stroke="#2f6fd0" stroke-width=".9"/><circle cx="6.800" cy="5.300" r="1" fill="#2f6fd0"/></svg>
<svg class="a" style="left:1382.2px;top:171.0px" width="12" height="10" viewBox="0 0 12 10"><path d="M2 8.600C2.400 4 6.600 1 11.400 .8C11.400 5.400 8 9 3.400 8.800z" fill="#9cc94a" stroke="#6f9a2a" stroke-width=".6"/><path d="M.6 9.600L4.600 6.800" stroke="#d98a2a" stroke-width="1.100"/></svg>
<div class="a" style="left:1312px;top:7.0px;width:7.5px;height:1px;background:#222;"></div>
<svg class="a" style="left:1343.6px;top:3.0px" width="9" height="8" viewBox="0 0 9 8"><rect x=".5" y="1.800" width="6" height="5.600" rx=".8" fill="#fff" stroke="#222" stroke-width=".9"/><path d="M2.200 1.800V.6h6v5.600H6.600" fill="none" stroke="#222" stroke-width=".9"/></svg>
<svg class="a" style="left:1378px;top:3.6px" width="8" height="8" viewBox="0 0 8 8"><path d="M.4 .4L7.600 7.600M7.600 .4L.4 7.600" stroke="#222" stroke-width=".9"/></svg>
<div class="a" style="left:620px;top:-1.0px;width:208px;height:2px;background:#a8a8a8;border-radius:0 0 2px 2px;box-shadow:0 0 2px 1px rgba(120,120,120,.45)"></div>
<div class="a" style="left:1212.4px;top:35.0px;width:99.4px;height:16.6px;background:#fff;border:1px solid #a3a3a3"></div>
<div class="t" style="left:1215.3px;top:39.8px;font-size:9.3px;letter-spacing:-0.093px;color:#5e5e5e;">Quick Access</div>
<svg class="a" style="left:1316.5px;top:32.0px" width="4" height="23" viewBox="0 0 4 23"><path d="M1 0v20c0 1.600 1 2.400 2.600 2.400" fill="none" stroke="#a9bbd3" stroke-width=".8"/></svg>
<svg class="a" style="left:1324.4px;top:38.6px" width="11" height="11" viewBox="0 0 11 11"><rect x=".5" y="2.400" width="8.600" height="8" fill="#fbf5dc" stroke="#8d8a78" stroke-width=".8"/><rect x=".5" y="2.400" width="8.600" height="2" fill="#6b8fc7"/><path d="M3.400 4.400v6M.5 7.400h8.600" stroke="#8d8a78" stroke-width=".6"/><polygon points="8.60,-0.18 9.42,1.58 11.18,2.40 9.42,3.22 8.60,4.98 7.78,3.22 6.02,2.40 7.78,1.58" fill="#fbe68a" stroke="#d9a622" stroke-width=".5"/></svg>
<div class="a" style="left:1339.4px;top:37.5px;width:1px;height:12.5px;background:#a9b4c2;"></div>
<svg class="a" style="left:1346.3px;top:37.8px" width="11.5" height="11.5" viewBox="0 0 12 12"><rect width="12" height="12" rx="1.600" fill="#1d3c70"/><path d="M9.400 2.400C8 1.400 5.800 2.200 6 4c.2 1.600 1.600 2.400 1 4.200c-.6 1.800-3.400 2.200-4.200 .8c-.8-1.400 .8-2.600 2.600-3.400C7.400 4.800 9.800 4 9.400 2.400z" stroke="#fff" stroke-width=".75" fill="none" stroke-linecap="round"/></svg>
<svg class="a" style="left:1px;top:1.6px" width="12.4" height="12.4" viewBox="0 0 12 12"><rect width="12" height="12" rx="1.600" fill="#1d3c70"/><path d="M9.400 2.400C8 1.400 5.800 2.200 6 4c.2 1.600 1.600 2.400 1 4.200c-.6 1.800-3.400 2.200-4.200 .8c-.8-1.400 .8-2.600 2.600-3.400C7.400 4.800 9.800 4 9.400 2.400z" stroke="#fff" stroke-width=".75" fill="none" stroke-linecap="round"/></svg>
<div class="a" style="left:1360.6px;top:36.0px;width:17.2px;height:14.6px;background:#bcd8f6;border:1px solid #a5c7ee"></div>
<svg class="a" style="left:1363px;top:37.4px" width="13" height="12" viewBox="0 0 13 12"><rect x="2.400" y=".6" width="5" height="4.400" fill="#f0d8b0" stroke="#a5682a" stroke-width=".7"/><path d="M2.400 2.800h5M4.900 .6v4.400" stroke="#a5682a" stroke-width=".6"/><circle cx="3.400" cy="7.600" r="2.600" fill="#3aa04a" stroke="#237a32" stroke-width=".5"/><circle cx="7" cy="9" r="2.500" fill="#8a5fc0" stroke="#5f3a96" stroke-width=".5"/><path d="M11 1v4.400c0 1.400-1.600 1.400-1.800 .4" stroke="#2f5fb0" stroke-width="1.100" fill="none"/></svg>
<svg class="a" style="left:1380px;top:37.6px" width="12" height="12" viewBox="0 0 12 12"><path d="M1 1.6l2.4 2.2M11 1.6L8.6 3.8M0 6.2h3M12 6.2H9M1 11l2.4-2.4M11 11L8.6 8.6M6 0v2.4" stroke="#3b6f2a" stroke-width="1"/><ellipse cx="6" cy="6.4" rx="3.4" ry="3.8" fill="#59b04a" stroke="#2f7a2a" stroke-width=".8"/><ellipse cx="6" cy="6.6" rx="1.6" ry="2" fill="#d6efc9"/></svg>
<svg class="a" style="left:244.4px;top:534.4px" width="11" height="12" viewBox="0 0 11 12"><rect x="3" y=".6" width="6.600" height="8" fill="#f4f6fa" stroke="#b9c3d3" stroke-width=".6"/><circle cx="4.400" cy="3.400" r="1.900" fill="#d8352a"/><path d="M.4 11.400L3.400 6l3 5.400z" fill="#f5c53a" stroke="#b98a14" stroke-width=".5"/><path d="M7.600 5.400l1.400 5" stroke="#8ea2c0" stroke-width="1"/></svg>
<svg class="a" style="left:305px;top:536.4px" width="8" height="8" viewBox="0 0 8 8"><rect x=".5" y=".5" width="7" height="5.400" rx=".6" fill="#f2f6fc" stroke="#d5e0f0" stroke-width=".8"/><rect x="1.800" y="1.800" width="4.400" height="2" fill="#2f5fb0"/><path d="M2 7.400h4" stroke="#e3ebf6" stroke-width="1"/></svg>
<svg class="a" style="left:357px;top:535.4px" width="11" height="11" viewBox="0 0 11 11"><path d="M.6 2.600h3.400l1 1.200h5v5.400H.6z" fill="#e9cf95" stroke="#b59452" stroke-width=".6"/><circle cx="4.400" cy="8" r="2.400" fill="#d6332a" stroke="#8e1a14" stroke-width=".5"/><circle cx="8" cy="8.600" r="2.200" fill="#4fae45" stroke="#2c7a2a" stroke-width=".5"/></svg>
<svg class="a" style="left:445.6px;top:535.4px" width="9" height="10" viewBox="0 0 9 10"><path d="M.8 2v6.400c0 1.400 3.400 1.400 3.400 0V2z" fill="#f3f6fb" stroke="#dfe7f3" stroke-width=".6"/><path d="M5 2.400v6c0 1.400 3.400 1.400 3.400 0v-6z" fill="#f3f6fb" stroke="#dfe7f3" stroke-width=".6"/><ellipse cx="2.500" cy="2" rx="1.700" ry=".9" fill="#fff"/><ellipse cx="6.700" cy="2.400" rx="1.700" ry=".9" fill="#fff"/><path d="M2.500 .8c1-1 3.400-1 4.200 .6" stroke="#fff" stroke-width=".8" fill="none"/></svg>
<svg class="a" style="left:512px;top:536.0px" width="9" height="9" viewBox="0 0 9 9"><rect x=".5" y=".5" width="8" height="7.600" fill="#e9eef7" stroke="#2a3f78" stroke-width=".9"/><path d="M.5 2.800h8M.5 5.400h8M3 2.800v5.400" stroke="#2a3f78" stroke-width=".8"/><rect x=".5" y=".5" width="8" height="2.200" fill="#3a4f98"/></svg>
<svg class="a" style="left:577px;top:534.6px" width="11" height="11" viewBox="0 0 11 11"><path d="M2.200 .6v9.600M5.400 1.600v8.600M8.600 .6v9.600" stroke="#5f7f3a" stroke-width=".9"/><circle cx="2.200" cy="4" r="1.700" fill="#e8b92a" stroke="#a87a10" stroke-width=".4"/><circle cx="5.400" cy="7.400" r="1.700" fill="#4fae45" stroke="#2c7a2a" stroke-width=".4"/><circle cx="8.600" cy="4.400" r="1.700" fill="#3f78d0" stroke="#234f96" stroke-width=".4"/></svg>
<svg class="a" style="left:623px;top:536.4px" width="8" height="8" viewBox="0 0 8 8"><path d="M1.2999999999999998 1.2999999999999998L6.7 6.7M6.7 1.2999999999999998L1.2999999999999998 6.7" stroke="#8a8a8a" stroke-width="1.15"/></svg>
<svg class="a" style="left:641px;top:536.4px" width="10" height="8" viewBox="0 0 10 8"><rect x=".5" y=".5" width="9" height="6.400" fill="#7f9cc4" stroke="#c9d6e8" stroke-width=".6"/><path d="M.5 2.600h9M.5 4.800h9M3.600 .5v6.400" stroke="#c9d6e8" stroke-width=".6"/></svg>
<svg class="a" style="left:817px;top:535.0px" width="10" height="10" viewBox="0 0 10 10"><path d="M5 .2v9.600M.2 5h9.600M1.600 1.600l6.800 6.800M8.400 1.600L1.600 8.400" stroke="#cfdbeb" stroke-width=".9"/><circle cx="5" cy="5" r="2.400" fill="#cfdbeb"/></svg>
<div class="a" style="left:832.4px;top:533.5px;width:1px;height:13px;background:#456a9c;"></div>
<svg class="a" style="left:840px;top:535.0px" width="10" height="10" viewBox="0 0 10 10"><path d="M5 .2v9.600M.2 5h9.600M1.600 1.600l6.800 6.800M8.400 1.600L1.600 8.400" stroke="#b4c2d6" stroke-width=".9"/><circle cx="5" cy="5" r="2.400" fill="#b4c2d6"/></svg>
<svg class="a" style="left:856.6px;top:534.6px" width="11" height="11" viewBox="0 0 11 11"><circle cx="5.400" cy="5.400" r="5" fill="#a9b7cb" stroke="#c5d0e0" stroke-width=".6" stroke-dasharray="1.400 .8"/><path d="M3.800 2.400L8.200 5.400L3.800 8.400z" fill="#fff"/></svg>
<svg class="a" style="left:873px;top:534.6px" width="12" height="12" viewBox="0 0 12 12"><path d="M1 5.400C1 2.800 3 1.600 5.400 2V.4L8.600 3L5.400 5.600V4C3.600 3.800 3 4.600 3 5.400z" fill="#f3c83a" stroke="#b98a14" stroke-width=".4"/><path d="M5.400 8.600l1.800 2L10.800 6" stroke="#49b7c9" stroke-width="1.500" fill="none"/></svg>
<div class="a" style="left:891.4px;top:537.0px;width:9.3px;height:7.6px;background:#ea3b3f;border:1px solid #c7282c;border-radius:1px"></div>
<div class="a" style="left:905.3px;top:533.5px;width:1px;height:13px;background:#456a9c;"></div>
<svg class="a" style="left:912px;top:534.0px" width="12" height="12" viewBox="0 0 12 12"><rect x="7" y="0" width="4.600" height="5.600" rx=".6" fill="#23272d"/><rect x="8" y="1" width="2.600" height="1" fill="#c7ccd3"/><rect x="8" y="2.800" width="2.600" height="1" fill="#c7ccd3"/><path d="M3 6V3.200h3" stroke="#6fba5a" stroke-width="1.200" fill="none"/><rect x=".4" y="6.200" width="6.400" height="5.200" fill="#4a86d8" stroke="#2a5aa0" stroke-width=".6"/><rect x="1" y="8.600" width="5.200" height="2.200" fill="#e7c34b"/><path d="M9.600 6.600v3.400H7.600" stroke="#55b85a" stroke-width="1.300" fill="none"/></svg>
<svg class="a" style="left:929.6px;top:535.0px" width="11" height="10" viewBox="0 0 11 10"><path d="M1 1l9 8M10 1L1 9" stroke="#9db0cb" stroke-width="1.800"/><rect x="3" y="2.600" width="5" height="4.800" fill="#8ea2bf"/></svg>
<svg class="a" style="left:945.6px;top:534.6px" width="12" height="11" viewBox="0 0 12 11"><rect x="4" y=".6" width="6.600" height="6.600" fill="#a9b9d0" stroke="#c2cee0" stroke-width=".6"/><rect x=".6" y="3" width="6" height="5" fill="#c6d1e0" stroke="#9fb0c8" stroke-width=".6"/><path d="M3 8v2.400M1.600 10.400h3" stroke="#d5dce6" stroke-width="1"/></svg>
<svg class="a" style="left:962.6px;top:536.0px" width="13" height="9" viewBox="0 0 13 9"><path d="M.6 1h3.400l1 1.200h4.600v6H.6z" fill="#ece6cf" stroke="#d9d0ae" stroke-width=".5"/><path d="M.6 8.200L2.800 4h9.400L10 8.200z" fill="#f7f3e2" stroke="#d9d0ae" stroke-width=".5"/></svg>
<svg class="a" style="left:987.4px;top:534.8px" width="8" height="4" viewBox="0 0 8 4"><path d="M.4 .2h7L3.900 3.600z" fill="#fff"/></svg>
<div class="a" style="left:1001px;top:536.6px;width:7px;height:2.2px;background:#fff;border-radius:.6px"></div>
<svg class="a" style="left:1017px;top:536.4px" width="7" height="7" viewBox="0 0 7 7"><rect x=".4" y=".4" width="6.200" height="6.200" fill="#fff" stroke="#e8eef6" stroke-width=".6"/><rect x=".4" y=".4" width="6.200" height="1.400" fill="#c9d4e4"/></svg>
<svg class="a" style="left:259.4px;top:570.0px" width="12.5" height="9.5" viewBox="0 0 12.5 9.5"><g transform="rotate(-14 6 5)"><path d="M.2 7.200C1.800 6.800 3 6.400 3.600 5C4 2.600 5.200 1 7.200 .8c1.600 0 2 1.200 2.600 2.600c.6 1.200 1.600 1.400 2.600 1.800c-2.600 1.600-5.400 1.600-8 2.800C2.800 8.600 1 8.400.2 7.200z" fill="#3a3a3c"/><path d="M3.800 5.400c1.800-.6 3.800-1 6-1.600" stroke="#9a9a9a" stroke-width=".7" fill="none"/></g></svg>
<svg class="a" style="left:247.8px;top:587.0px" width="8" height="6" viewBox="0 0 8 6"><path d="M.8 .8L3.900 4.200L7 .8" fill="none" stroke="#22395c" stroke-width="1.500"/></svg>
<svg class="a" style="left:259.6px;top:583.8px" width="12" height="12" viewBox="0 0 12 12"><g fill="#eab92c" stroke="#6b5210" stroke-width=".45" stroke-linejoin="round"><path d="M.4 11.400C1.200 10 1.600 8.600 2.400 7.200"  fill="none" stroke="#c89a1c" stroke-width="1"/><path d="M2 8C2.800 5 5.600 3.400 8 4.400L9.800 6.800C8.400 8.400 5.600 9 3.600 9.600z"/><path d="M3.400 9L2.200 11.800L3.600 11.600L5 9z"/><path d="M8.400 7.200L10.800 10.400L11.400 9.400L9.800 6.400z"/><path d="M6 8.600L7 11L8 10.600L7.400 8z"/><path d="M6.600 1.800L6.800 .2L8 1.400C8.600 1.200 9.200 1.200 9.800 1.400L11 .2L11.200 2C11.800 3.400 11 5 9.400 5.400C7.600 5.600 6.400 4.400 6.600 1.800z"/></g><circle cx="8.200" cy="3" r=".4" fill="#3a2a00"/><circle cx="10" cy="3" r=".4" fill="#3a2a00"/></svg>
<svg class="a" style="left:273.4px;top:598.4px" width="13" height="11" viewBox="0 0 13 11"><rect x="2.800" y="1.600" width="5" height="4" fill="#f7ebba" stroke="#d9c682" stroke-width=".5"/><circle cx="9.200" cy="3" r="2.500" fill="#56a3a0" stroke="#3a6f9a" stroke-width=".6"/><circle cx="8.600" cy="2.400" r=".9" fill="#d4ecd0"/><path d="M.6 4.600h3l.8 1H9v4.800H.6z" fill="#7fb0ea" stroke="#3f6fc0" stroke-width=".6"/><path d="M.6 10.400L2.600 6.400h9.800l-2 4z" fill="#a9cdf5" stroke="#3f6fc0" stroke-width=".6"/></svg>
<svg class="a" style="left:428.6px;top:568.0px" width="10" height="11" viewBox="0 0 10 11"><rect x=".6" y="1.600" width="5" height="9" fill="#eceff2" stroke="#8d96a1" stroke-width=".7"/><path d="M1.600 5h3M1.600 7h3" stroke="#a9b1bc" stroke-width=".7"/><rect x="1" y=".4" width="3.400" height="2.600" fill="#d64a4a" stroke="#9a2a2a" stroke-width=".4"/><rect x="5" y="5.600" width="4.600" height="4.800" rx=".6" fill="#4f86d8" stroke="#2a5aa8" stroke-width=".6"/><rect x="6.200" y="7" width="2.200" height="2" fill="#dbe8fb"/></svg>
<svg class="a" style="left:428.6px;top:582.8px" width="10" height="11" viewBox="0 0 10 11"><rect x=".6" y="1.600" width="5" height="9" fill="#eceff2" stroke="#8d96a1" stroke-width=".7"/><path d="M1.600 5h3M1.600 7h3" stroke="#a9b1bc" stroke-width=".7"/><rect x="1.400" y="1" width="3" height="2" fill="#8fbf7a" stroke="#5f8f4a" stroke-width=".4"/><path d="M4.600 5.400L9.800 8.200L4.600 11z" fill="#2fa043" stroke="#1d7a2e" stroke-width=".5"/></svg>
<svg class="a" style="left:428px;top:597.6px" width="11" height="11" viewBox="0 0 11 11"><circle cx="5.300" cy="5.300" r="5" fill="#3aa84a" stroke="#1f7a2c" stroke-width=".6"/><path d="M2.600 5.400l2 2.200L8.200 3.400" stroke="#fff" stroke-width="1.500" fill="none"/></svg>
<svg class="a" style="left:519px;top:583.0px" width="11" height="11" viewBox="0 0 11 11"><circle cx="5.300" cy="5.300" r="5" fill="#3aa84a" stroke="#1f7a2c" stroke-width=".7"/><path d="M3.800 2.400L8.200 5.300L3.800 8.200z" fill="#fff"/></svg>
<svg class="a" style="left:519px;top:599.4px" width="12" height="8" viewBox="0 0 12 8"><path d="M.6 .8h3.200l1 1.200h4.800v5.400H.6z" fill="#f5d88a" stroke="#c89a2a" stroke-width=".6"/><path d="M.6 7.400L2.600 3.400h8.800l-2 4z" fill="#fbeab0" stroke="#c89a2a" stroke-width=".6"/></svg>
<div class="t" style="left:593.6px;top:600.1px;font-size:9.3px;color:#111;">D</div>
<div class="a" style="left:0px;top:758.8px;width:1400px;height:29.2px;background:linear-gradient(90deg,#f1ecd6 0%,#f2ebd7 40%,#f2e7d8 47%,#f2e5d8 60%,#f0e4da 100%);"></div>
<div class="a" style="left:800px;top:758.8px;width:36px;height:29.2px;background:rgba(255,255,255,.45);"></div>
<div class="a" style="left:196px;top:786.0px;width:29px;height:2px;background:#1fa3ae;"></div>
<div class="a" style="left:410.5px;top:786.0px;width:29.5px;height:2px;background:#1fa3ae;"></div>
<div class="a" style="left:800px;top:785.6px;width:36px;height:2.4px;background:#1fa3ae;"></div>
<svg class="a" style="left:11.6px;top:768.1px" width="12" height="12" viewBox="0 0 12 12"><path d="M0 1.800L5.200 1v4.600H0zM6 .9L12 0v5.600H6zM0 6.400h5.200V11L0 10.200zM6 6.400h6V12l-6-.9z" fill="#111"/></svg>
<svg class="a" style="left:46px;top:767.7px" width="13" height="13" viewBox="0 0 13 13"><circle cx="8" cy="5" r="3.900" fill="none" stroke="#1a1a1a" stroke-width="1.200"/><path d="M5.200 7.800L.8 12.200" stroke="#1a1a1a" stroke-width="1.400"/></svg>
<svg class="a" style="left:81px;top:768.7px" width="13" height="10" viewBox="0 0 13 10"><path d="M0 1.600h10.400M0 8.400h10.400M2.400 0v10M8.400 0v10M12.200 1v2.600M12.200 5.600v3.400" fill="none" stroke="#1a1a1a" stroke-width="1.100"/></svg>
<div class="a" style="left:108.6px;top:768.2px;width:1.1px;height:11.5px;background:#333;"></div>
<div class="a" style="left:111.4px;top:768.2px;width:1.1px;height:11.5px;background:#333;"></div>
<svg class="a" style="left:130px;top:765.7px" width="18" height="16" viewBox="0 0 18 16"><path d="M.6 6L9 .6L17.400 6v9.400H.6z" fill="#1f7fd8"/><path d="M2.200 6.400h13.600L9 11z" fill="#fff"/><path d="M.6 6.400L9 12l8.400-5.600v9H.6z" fill="#3f9be8"/><path d="M.6 15.400L7 10.400M17.400 15.400L11 10.400" stroke="#1f6fc0" stroke-width=".6"/></svg>
<svg class="a" style="left:166px;top:765.3px" width="18" height="17.4" viewBox="0 0 18 17.4"><defs><linearGradient id="eg" x1="0" y1="0" x2="1" y2="0"><stop offset="0" stop-color="#2a9fe0"/><stop offset=".55" stop-color="#3cc3c0"/><stop offset="1" stop-color="#5ad66a"/></linearGradient><linearGradient id="eg2" x1="0" y1="0" x2="0" y2="1"><stop offset="0" stop-color="#2b8fdc"/><stop offset="1" stop-color="#1657b0"/></linearGradient></defs><path d="M.6 9.600C.6 4 4.600 .5 9.200 .5c4.800 0 8.200 3.400 8.200 7.200c0 2.400-1.800 3.800-4 3.800c-2 0-2.800-.8-2.600-1.800c.6-.6 .8-1.400 .6-2.200c-.6-2-2.600-2.600-4.400-2.400C3.400 5.600 .8 7.200.6 9.600z" fill="url(#eg)"/><path d="M.6 9.600c.2-2.800 3-4.600 6-4.600c-1.800 1-2.400 2.800-2 5c.6 2.800 3.200 5 7 4.400c1.600-.4 2.800-1.200 3.600-2c-.6 2.400-3 4.600-6.600 4.600C4 17 .6 13.600.6 9.600z" fill="url(#eg2)"/></svg>
<svg class="a" style="left:202.6px;top:766.7px" width="17" height="14" viewBox="0 0 17 14"><path d="M.6 1.400h5l1.200 1.400h9.600v10.600H.6z" fill="#f5c542"/><path d="M.6 4.400h15.800v9H.6z" fill="#fbd96a"/><path d="M3.600 8h9.800v5.400H3.600z" fill="#3f8fe0"/><rect x="6.600" y="10.600" width="3.800" height="2.800" fill="#fbd96a"/></svg>
<div class="a" style="left:238.6px;top:766.3000000000001px;width:15.6px;height:15.6px;background:#0b1d3f;border-radius:3px;color:#4fb8ff;font-size:8.8px;font-weight:bold;text-align:center;line-height:16.2px;letter-spacing:-.3px">Ps</div>
<div class="a" style="left:274px;top:766.3000000000001px;width:15.6px;height:15.6px;background:#1b0a5e;border-radius:3px;color:#b5a0ff;font-size:8.8px;font-weight:bold;text-align:center;line-height:16.2px;letter-spacing:-.3px">Pr</div>
<div class="a" style="left:309.300px;top:765px;width:17.100px;height:17.100px;border-radius:50%;background:#3b84f2;color:#fff;font-size:11.500px;font-weight:bold;text-align:center;line-height:18.600px">L</div>
<svg class="a" style="left:345px;top:765.1px" width="17.5" height="17.5" viewBox="0 0 17.5 17.5"><circle cx="8.700" cy="8.700" r="8.400" fill="#fdfdfd" stroke="#e6e2ee" stroke-width=".6"/><path d="M3.400 8.400L8.600 3.800v2.600c4 .2 6 3 4.600 7.400c-.8-2.400-2.200-3.400-4.600-3.200v2.600z" fill="#3b7bf0"/></svg>
<svg class="a" style="left:380px;top:765.1px" width="18" height="18" viewBox="0 0 18 18"><circle cx="8.600" cy="8.600" r="6.800" fill="#fff" stroke="#3a8fe8" stroke-width="3"/><path d="M7.400 15.600c-2.400 0-2.600-3 -.4-3.400c.4-2.600 4-3 5-.8c2.600-.6 4.200 1.400 3.600 3c-.3 .8-1 1.200-2 1.200z" fill="#fff" stroke="#cfe0f5" stroke-width=".5"/></svg>
<svg class="a" style="left:416px;top:766.3px" width="17" height="15" viewBox="0 0 17 15"><ellipse cx="6" cy="5.600" rx="5.800" ry="5" fill="#2fc65a"/><path d="M2.600 9.600L2 12l2.600-1.400z" fill="#2fc65a"/><ellipse cx="11.600" cy="9.600" rx="4.800" ry="4" fill="#e9e9e9"/><path d="M14 12.800l.6 1.800l-2.200-1z" fill="#e9e9e9"/><circle cx="4" cy="4.400" r=".8" fill="#fff"/><circle cx="8" cy="4.400" r=".8" fill="#fff"/><circle cx="10" cy="8.600" r=".6" fill="#9a9a9a"/><circle cx="13.200" cy="8.600" r=".6" fill="#9a9a9a"/></svg>
<svg class="a" style="left:452.7px;top:764.9px" width="17" height="17.5" viewBox="0 0 17 17.500"><ellipse cx="8.500" cy="10.400" rx="6.400" ry="5.600" fill="#111"/><ellipse cx="8.500" cy="5.600" rx="4.400" ry="5" fill="#111"/><ellipse cx="8.500" cy="11.600" rx="3.600" ry="4" fill="#fff"/><path d="M3.600 8.400c3 1.600 7 1.600 9.800 0l.4 1.800c-3.400 1.800-7.400 1.600-10.600 0z" fill="#e8332a"/><path d="M5.600 9.800l-.6 3.400l1.800 .4l.4-3.400z" fill="#e8332a"/><ellipse cx="6.800" cy="4.400" rx="1" ry="1.500" fill="#fff"/><ellipse cx="10.200" cy="4.400" rx="1" ry="1.500" fill="#fff"/><ellipse cx="8.500" cy="7" rx="2.200" ry=".8" fill="#f5a623"/><ellipse cx="5" cy="16.200" rx="3" ry="1.100" fill="#f5a623"/><ellipse cx="12" cy="16.200" rx="3" ry="1.100" fill="#f5a623"/></svg>
<svg class="a" style="left:487.6px;top:764.9px" width="18" height="18" viewBox="0 0 18 18"><rect width="18" height="18" rx="2.600" fill="#f0523c"/><path d="M13.600 4.600H6.400c-1.600 0-2.200 .8-2.200 2v.8c0 1.200 .8 2 2.200 2h5.200c1.400 0 2.200 .8 2.200 2v.6c0 1.200-.8 2-2.200 2H4.200" fill="none" stroke="#fff" stroke-width="2.300"/></svg>
<svg class="a" style="left:522.6px;top:765.1px" width="18.5" height="18" viewBox="0 0 18.5 18"><circle cx="8.800" cy="9" r="8.400" fill="#f79a1e"/><circle cx="10" cy="9" r="8" fill="#2c2255"/><path d="M3 6.600h14M2.400 9h15.400M3 11.400h14" stroke="#e9e6f2" stroke-width="1.300"/></svg>
<svg class="a" style="left:559px;top:764.7px" width="19" height="19" viewBox="0 0 19 19"><path d="M1 3l6-2.600L18 5l-1 7l-5 6.600L3 16z" fill="#fe315d"/><path d="M9 1l9 4l-2 9l-6 4z" fill="#087cfa"/><path d="M1 3l5 1v6l-4 3z" fill="#fc801d"/><rect x="4" y="4" width="11" height="11" fill="#111"/><rect x="5.400" y="12.400" width="4" height=".9" fill="#fff"/><path d="M5.600 5.600h2.400M6.800 5.600v4M5.600 9.600h2.400M10.800 5.600v2.800c0 1.400-1.400 1.400-1.800 .8" stroke="#fff" stroke-width=".8" fill="none"/></svg>
<svg class="a" style="left:595px;top:764.7px" width="18" height="18.5" viewBox="0 0 18 18.5"><rect x="1" y="2.600" width="12.600" height="14.400" rx="1" fill="#f4f8ee" stroke="#7c9a5a" stroke-width=".8"/><rect x="1.600" y="6" width="11.400" height="10.400" fill="#8fd14a"/><path d="M3 9.600h6M3 12h7" stroke="#2f5f1a" stroke-width="1"/><path d="M2.400 2v2M5 2v2M7.600 2v2M10.200 2v2" stroke="#555" stroke-width=".9"/><path d="M16.600 .8L9.600 13.600l-.6 2.800l2.200-1.800L18 2z" fill="#f0b03a" stroke="#8a5a14" stroke-width=".5"/></svg>
<svg class="a" style="left:630.6px;top:765.3px" width="18" height="18" viewBox="0 0 18 18"><circle cx="9" cy="9" r="8.600" fill="#fff"/><path d="M9 .4A8.600 8.600 0 0 1 16.450 4.700H9A4.300 4.300 0 0 0 5.280 6.850L1.550 4.700A8.600 8.600 0 0 1 9 .4z" fill="#e94335"/><path d="M16.450 4.700A8.600 8.600 0 0 1 9 17.600l3.720-6.450A4.300 4.300 0 0 0 12.720 6.850z" fill="#fbbc05"/><path d="M9 17.600A8.600 8.600 0 0 1 1.550 4.700l3.730 6.450A4.300 4.300 0 0 0 9 13.300l3.720-2.150z" fill="#34a853"/><circle cx="9" cy="9" r="3.500" fill="#4285f4" stroke="#fff" stroke-width=".9"/></svg>
<div class="a" style="left:668px;top:765.700px;width:17px;height:17px;background:#fdfdfd;border-radius:3px;box-shadow:0 0 1px rgba(0,0,0,.25);font-family:'Liberation Serif',serif;font-size:12.500px;color:#4a4a4a;text-align:center;line-height:17.500px">T</div>
<svg class="a" style="left:702px;top:765.1px" width="18" height="18" viewBox="0 0 18 18"><rect width="18" height="18" rx="2" fill="#1f8fe8"/><path d="M0 5l6 13H2c-1.200 0-2-.8-2-2z" fill="#ffd02a"/><path d="M3.600 12.600L18 12.600V16c0 1.200-.8 2-2 2H6z" fill="#e83a6a"/><circle cx="9.600" cy="7.400" r="3.600" fill="#fff" stroke="#fff" stroke-width="1.600" fill-opacity=".0"/><circle cx="9.600" cy="7.400" r="3.400" fill="none" stroke="#fff" stroke-width="1.700"/><path d="M12 10l3 3.200" stroke="#fff" stroke-width="1.900"/></svg>
<svg class="a" style="left:738px;top:764.7px" width="18" height="18.5" viewBox="0 0 18 18.5"><path d="M3 3.600v10.800c0 2.600 11 2.600 11 0V3.600z" fill="#d8548a"/><ellipse cx="8.500" cy="3.600" rx="5.500" ry="2.400" fill="#f08ab4"/><path d="M3 7.400c0 2.400 11 2.400 11 0M3 11c0 2.400 11 2.400 11 0" stroke="#a82a5e" stroke-width=".8" fill="none"/><circle cx="5" cy="13.600" r="3.800" fill="#b9bcc2" stroke="#777b84" stroke-width=".8"/><circle cx="5" cy="13.600" r="1.400" fill="#f1ecd8"/><path d="M11 15.600l5 1.600" stroke="#e89ab8" stroke-width="1.200"/></svg>
<svg class="a" style="left:774px;top:765.3px" width="17.4" height="17.4" viewBox="0 0 12 12"><rect width="12" height="12" rx="1.600" fill="#1d3c70"/><path d="M9.400 2.400C8 1.400 5.800 2.200 6 4c.2 1.600 1.600 2.400 1 4.200c-.6 1.800-3.400 2.200-4.200 .8c-.8-1.400 .8-2.600 2.600-3.400C7.400 4.800 9.800 4 9.400 2.400z" stroke="#fff" stroke-width=".75" fill="none" stroke-linecap="round"/></svg>
<svg class="a" style="left:809.6px;top:765.3px" width="17.4" height="17.4" viewBox="0 0 12 12"><rect width="12" height="12" rx="1.600" fill="#1d3c70"/><path d="M9.400 2.400C8 1.400 5.800 2.200 6 4c.2 1.600 1.600 2.400 1 4.200c-.6 1.800-3.400 2.200-4.200 .8c-.8-1.400 .8-2.600 2.600-3.400C7.400 4.800 9.800 4 9.400 2.400z" stroke="#fff" stroke-width=".75" fill="none" stroke-linecap="round"/></svg>
<svg class="a" style="left:1134px;top:765.0px" width="11" height="16" viewBox="0 0 11 16"><path d="M2.600 .6v3.400M7.400 .6v3.400" stroke="#fff" stroke-width="1.600"/><path d="M.8 4h8.400v3.600c0 2.400-1.800 3.600-3 3.800V15.400H3.800v-4c-1.200-.2-3-1.400-3-3.800z" fill="#fff" stroke="#b5b0a6" stroke-width=".6"/></svg>
<div class="a" style="left:1145.6px;top:765.4px;width:30px;height:15.6px;background:#fff;border-radius:2px;box-shadow:0 0 1px rgba(0,0,0,.3)"></div>
<div class="a" style="left:1175.6px;top:769.6px;width:2px;height:7px;background:#fff;border-radius:0 1px 1px 0"></div>
<div class="a" style="left:1147.2px;top:767.0px;width:26.8px;height:12.4px;background:#2c9a50;"></div>
<div class="t" style="left:1148.6px;top:768.0px;font-size:9.4px;letter-spacing:-0.010px;color:#fff;">100%</div>
<svg class="a" style="left:1183px;top:770.0px" width="9" height="6" viewBox="0 0 9 6"><path d="M.6 5.400L4.500 1L8.400 5.400" fill="none" stroke="#222" stroke-width="1.100"/></svg>
<svg class="a" style="left:1198px;top:766.6px" width="12.6" height="13.1" viewBox="0 0 17 17.500"><ellipse cx="8.500" cy="10.400" rx="6.400" ry="5.600" fill="#111"/><ellipse cx="8.500" cy="5.600" rx="4.400" ry="5" fill="#111"/><ellipse cx="8.500" cy="11.600" rx="3.600" ry="4" fill="#fff"/><path d="M3.600 8.400c3 1.600 7 1.600 9.800 0l.4 1.800c-3.400 1.800-7.400 1.600-10.600 0z" fill="#e8332a"/><path d="M5.600 9.800l-.6 3.400l1.800 .4l.4-3.400z" fill="#e8332a"/><ellipse cx="6.800" cy="4.400" rx="1" ry="1.500" fill="#fff"/><ellipse cx="10.200" cy="4.400" rx="1" ry="1.500" fill="#fff"/><ellipse cx="8.500" cy="7" rx="2.200" ry=".8" fill="#f5a623"/><ellipse cx="5" cy="16.200" rx="3" ry="1.100" fill="#f5a623"/><ellipse cx="12" cy="16.200" rx="3" ry="1.100" fill="#f5a623"/></svg>
<svg class="a" style="left:1216px;top:770.0px" width="14" height="8" viewBox="0 0 14 8"><rect x=".4" y=".6" width="11.600" height="6.800" rx="1" fill="#2a2a2a"/><rect x="12" y="2.600" width="1.400" height="2.800" fill="#2a2a2a"/><path d="M3 1.600v4.800M5.400 1.600v4.800M7.800 1.600v4.800M10 1.600v4.800" stroke="#efe6da" stroke-width=".7"/></svg>
<svg class="a" style="left:1236px;top:768.6px" width="11" height="11" viewBox="0 0 11 11"><path d="M.6 10.400A9.800 9.800 0 0 1 10.400 .6" fill="none" stroke="#555" stroke-width="1"/><path d="M3.400 10.400A7 7 0 0 1 10.400 3.400" fill="none" stroke="#555" stroke-width="1"/><path d="M6 10.400A4.400 4.400 0 0 1 10.400 6" fill="none" stroke="#555" stroke-width="1"/><circle cx="9.600" cy="9.600" r="1" fill="#555"/></svg>
<svg class="a" style="left:1251px;top:768.0px" width="14" height="11" viewBox="0 0 14 11"><path d="M.6 3.600h2.400L6 .8v9.400L3 7.400H.6z" fill="none" stroke="#333" stroke-width=".9"/><path d="M7.800 3.400c1 1 1 3.200 0 4.200M9.600 2c1.800 1.800 1.800 5.200 0 7M11.400 .8c2.400 2.600 2.400 6.800 0 9.400" fill="none" stroke="#333" stroke-width=".8"/></svg>
<svg class="a" style="left:1270.6px;top:768.0px" width="10" height="11" viewBox="0 0 10 11"><rect x="1" y="2.400" width="6.400" height="3.600" fill="none" stroke="#8a867e" stroke-width=".9"/><path d="M4.200 .4v9" stroke="#8a867e" stroke-width=".9"/><circle cx="7.400" cy="8" r="2" fill="none" stroke="#8a867e" stroke-width=".9"/></svg>
<svg class="a" style="left:1289px;top:767.2px" width="12.4" height="12.4" viewBox="0 0 12 12"><rect width="12" height="12" rx="2.200" fill="#2f86ee"/><circle cx="5.800" cy="5.600" r="3" fill="none" stroke="#fff" stroke-width="1.400"/><path d="M7.400 7.400L9.600 9.600" stroke="#fff" stroke-width="1.400"/></svg>
<div class="t" style="left:1324.0px;top:763.1px;font-size:9.6px;letter-spacing:-0.405px;color:#222;">19:20</div>
<div class="t" style="left:1316.0px;top:776.5px;font-size:9.6px;letter-spacing:-0.046px;color:#222;">2021/2/5</div>
<svg class="a" style="left:1370px;top:767.4px" width="13" height="12" viewBox="0 0 13 12"><path d="M.6 .6h11.400v8.200H8L6.300 10.800L4.600 8.800H.6z" fill="none" stroke="#222" stroke-width="1"/></svg>
<div class="t" style="left:1265.0px;top:770.3px;font-size:9.3px;letter-spacing:0.408px;color:rgba(150,150,150,.28);">blog.csdn.net/qq_42483628</div>
<div class="a" style="left:0px;top:736.5px;width:1400px;height:2.3px;background:linear-gradient(#cde3fa,#dcebfb);"></div>
<div class="a" style="left:0px;top:738.8px;width:1400px;height:20.2px;background:linear-gradient(#93bdeb,#8dbaee);"></div>
<div class="a" style="left:0px;top:738.6px;width:1400px;height:1px;background:#6a9fe2;"></div>
<div class="a" style="left:1192.5px;top:744px;width:1px;height:11px;background:repeating-linear-gradient(#6f97cc 0 1px,transparent 1px 2.5px)"></div>
<div class="a" style="left:1267.6px;top:724.0px;width:119.6px;height:20px;background:#f3f8fe;border:1px solid #a9c8ef;border-radius:4px;box-shadow:0 0 2px rgba(80,130,200,.4)"></div>
<svg class="a" style="left:1275px;top:728.0px" width="12" height="12" viewBox="0 0 12 12"><rect width="12" height="12" rx="2.200" fill="#2f86ee"/><circle cx="5.800" cy="5.600" r="3" fill="none" stroke="#fff" stroke-width="1.400"/><path d="M7.400 7.400L9.600 9.600" stroke="#fff" stroke-width="1.400"/></svg>
<svg class="a" style="left:1294px;top:729.0px" width="9" height="10" viewBox="0 0 9 10"><rect x=".8" y="2.400" width="7.400" height="4.200" fill="none" stroke="#4a74b4" stroke-width="1.100"/><path d="M4.500 .2v9.600" stroke="#4a74b4" stroke-width="1.100"/></svg>
<svg class="a" style="left:1309.6px;top:730.6px" width="10" height="9" viewBox="0 0 10 9"><path d="M5.600 .4C10.400 2.400 9.400 8.400 4 8.600C2.400 8.600 1 8 .4 7C3.800 7.400 6.600 4.600 5.600 .4z" fill="#4a74b4"/></svg>
<svg class="a" style="left:1326px;top:731.0px" width="7" height="6" viewBox="0 0 7 6"><circle cx="1.400" cy="2" r="1.100" fill="#4a74b4"/><path d="M4.400 .8c1.400 .4 1.400 2 0 3" stroke="#4a74b4" stroke-width="1" fill="none"/></svg>
<svg class="a" style="left:1339px;top:730.0px" width="11" height="8" viewBox="0 0 11 8"><rect x=".5" y=".5" width="10" height="6.600" rx="1" fill="#4a74b4"/><path d="M2 2.400h7M2 4h5" stroke="#e8f0fc" stroke-width=".7"/></svg>
<svg class="a" style="left:1355px;top:729.0px" width="8" height="10" viewBox="0 0 8 10"><path d="M2.400 1v8M5.600 1v8M.4 5.600h3.200M4.400 3.600h3.200" stroke="#4a74b4" stroke-width="1.100"/></svg>
<svg class="a" style="left:1370px;top:729.0px" width="9" height="10" viewBox="0 0 9 10"><path d="M7.800 1.200c-1.600-1-3.600 0-3.400 2.200L.8 7.600l1.400 1.400l4-3.800c2 .4 3.200-1.400 2.400-3L7 3.800l-1-.8z" fill="#4a74b4"/></svg>
<div class="a" style="left:1248.4px;top:455.6px;width:70px;height:30.6px;background:#fff;border-radius:15.300px;box-shadow:0 1px 4px rgba(0,0,0,.18)"></div>
<div class="a" style="left:1288.6px;top:450.4px;width:39.6px;height:39.6px;background:#fff;border-radius:50%;box-shadow:0 1px 4px rgba(0,0,0,.2)"></div>
<div class="a" style="left:1286px;top:457.6px;width:12px;height:26.6px;background:#fff;"></div>
<svg class="a" style="left:1288.6px;top:450.4px" width="40" height="40" viewBox="0 0 40 40"><path d="M20.600 37.300A17.500 17.500 0 0 1 4.300 27.600" fill="none" stroke="#3cc28a" stroke-width="1.200"/></svg>
<div class="t" style="left:1296.2px;top:463.6px;font-size:16.6px;letter-spacing:-0.032px;color:#111;">20</div>
<div class="t" style="left:1315.2px;top:472.5px;font-size:6.4px;color:#333;">%</div>
<svg class="a" style="left:1256.6px;top:463.4px" width="6" height="5" viewBox="0 0 6 5"><path d="M3 .4v4.400M.6 2.600L3 .4l2.400 2.200" fill="none" stroke="#5cb85c" stroke-width=".8"/></svg>
<svg class="a" style="left:1256.6px;top:473.2px" width="6" height="5" viewBox="0 0 6 5"><path d="M3 .2v4.400M.6 2.400L3 4.600l2.400-2.200" fill="none" stroke="#f0a060" stroke-width=".8"/></svg>
<div class="t" style="left:1264.6px;top:463.3px;font-size:6.6px;color:#707070;">7</div>
<div class="t" style="left:1273.6px;top:463.3px;font-size:6.6px;letter-spacing:-0.179px;color:#707070;">K/s</div>
<div class="t" style="left:1264.6px;top:473.2px;font-size:6.6px;color:#707070;">15</div>
<div class="t" style="left:1275.0px;top:473.2px;font-size:6.6px;letter-spacing:-0.179px;color:#707070;">K/s</div>
<div class="a" style="left:596px;top:593.5px;width:203.5px;height:163px;background:#f2f2f2;border:1px solid #cdcdcd;box-shadow:1px 1px 2px rgba(0,0,0,.25)"></div>
<div class="a" style="left:598px;top:665.0px;width:199.5px;height:15px;background:#91c9f7;"></div>
<div class="a" style="left:620px;top:613.5px;width:176px;height:1px;background:#dcdcdc;"></div>
<div class="a" style="left:620px;top:683.0px;width:176px;height:1px;background:#dcdcdc;"></div>
<div class="a" style="left:620px;top:704.0px;width:176px;height:1px;background:#dcdcdc;"></div>
<div class="t" style="left:621.0px;top:599.3px;font-size:9.3px;letter-spacing:0.085px;color:#111;">Configure Server Connector</div>
<div class="t" style="left:621.0px;top:620.3px;font-size:9.3px;letter-spacing:0.093px;color:#8d8d8d;">Debug Server</div>
<div class="t" style="left:621.0px;top:636.3px;font-size:9.3px;letter-spacing:-0.104px;color:#8d8d8d;">Run Server</div>
<div class="t" style="left:621.0px;top:652.7px;font-size:9.3px;letter-spacing:0.004px;color:#111;">Restart Server</div>
<div class="t" style="left:621.0px;top:668.8px;font-size:9.3px;letter-spacing:0.081px;color:#111;">Stop Server</div>
<div class="t" style="left:621.0px;top:689.3px;font-size:9.3px;letter-spacing:0.117px;color:#111;">Add Deployment...</div>
<div class="t" style="left:621.0px;top:710.8px;font-size:9.3px;letter-spacing:0.064px;color:#111;">Manage Launch Configurations...</div>
<div class="t" style="left:621.0px;top:726.9px;font-size:9.3px;letter-spacing:0.030px;color:#111;">Run Configurations...</div>
<div class="t" style="left:621.0px;top:743.1px;font-size:9.3px;letter-spacing:0.100px;color:#111;">Debug Configurations...</div>
<svg class="a" style="left:600.6px;top:598.4px" width="10" height="9" viewBox="0 0 10 9"><circle cx="4.800" cy="4.600" r="3.400" fill="#dfe8f3" stroke="#4f6f9a" stroke-width=".9"/><path d="M2.600 2.400l4.400 4.400M4.800 .4v1.400M1 4.600H.2M9.400 4.600H8.400" stroke="#4f6f9a" stroke-width=".9"/><circle cx="4.800" cy="4.600" r="1.200" fill="#4f6f9a"/></svg>
<svg class="a" style="left:600.8px;top:619.0px" width="10" height="10" viewBox="0 0 10 10"><path d="M5 .2v9.600M.2 5h9.600M1.600 1.600l6.800 6.800M8.400 1.600L1.600 8.400" stroke="#c4c4c4" stroke-width=".9"/><circle cx="5" cy="5" r="2.400" fill="#c4c4c4"/></svg>
<svg class="a" style="left:600.6px;top:635.0px" width="10" height="10" viewBox="0 0 10 10"><circle cx="5" cy="5" r="4.600" fill="#c9c9c9" stroke="#b8b8b8" stroke-width=".5"/><path d="M3.600 2.400L7.600 5L3.600 7.600z" fill="#fff"/></svg>
<svg class="a" style="left:600.6px;top:650.6px" width="11" height="11" viewBox="0 0 11 11"><path d="M1 5C1 2.600 2.800 1.600 5 2V.6L8 3L5 5.400V4C3.400 3.800 2.800 4.400 2.800 5z" fill="#f3c83a" stroke="#b98a14" stroke-width=".4"/><path d="M9.800 6.400C9.800 8.800 8 9.800 5.800 9.400V10.800L2.800 8.400L5.800 6V7.400C7.400 7.600 8 7 8 6.400z" fill="#5aa7e0" stroke="#2f6fb0" stroke-width=".4"/></svg>
<div class="a" style="left:602px;top:669.3px;width:8.6px;height:7.4px;background:#e9363c;border:1px solid #c7282c;border-radius:1px"></div>
<svg class="a" style="left:600px;top:687.0px" width="12" height="12" viewBox="0 0 12 12"><path d="M2.600 6V3.400h3.200" stroke="#4a8a3a" stroke-width="1.200" fill="none" stroke-dasharray="1.600 .8"/><path d="M8 .6l3 3M11 .6l-3 3" stroke="#2a2a2a" stroke-width="1.100"/><rect x=".4" y="6.600" width="6" height="4.800" fill="#4a86d8" stroke="#2a5aa0" stroke-width=".6"/><rect x="1" y="8.800" width="4.800" height="2" fill="#e7c34b"/><path d="M9.800 5.600v4H7.600" stroke="#c52a2a" stroke-width="1.200" fill="none"/></svg>
</body></html>
